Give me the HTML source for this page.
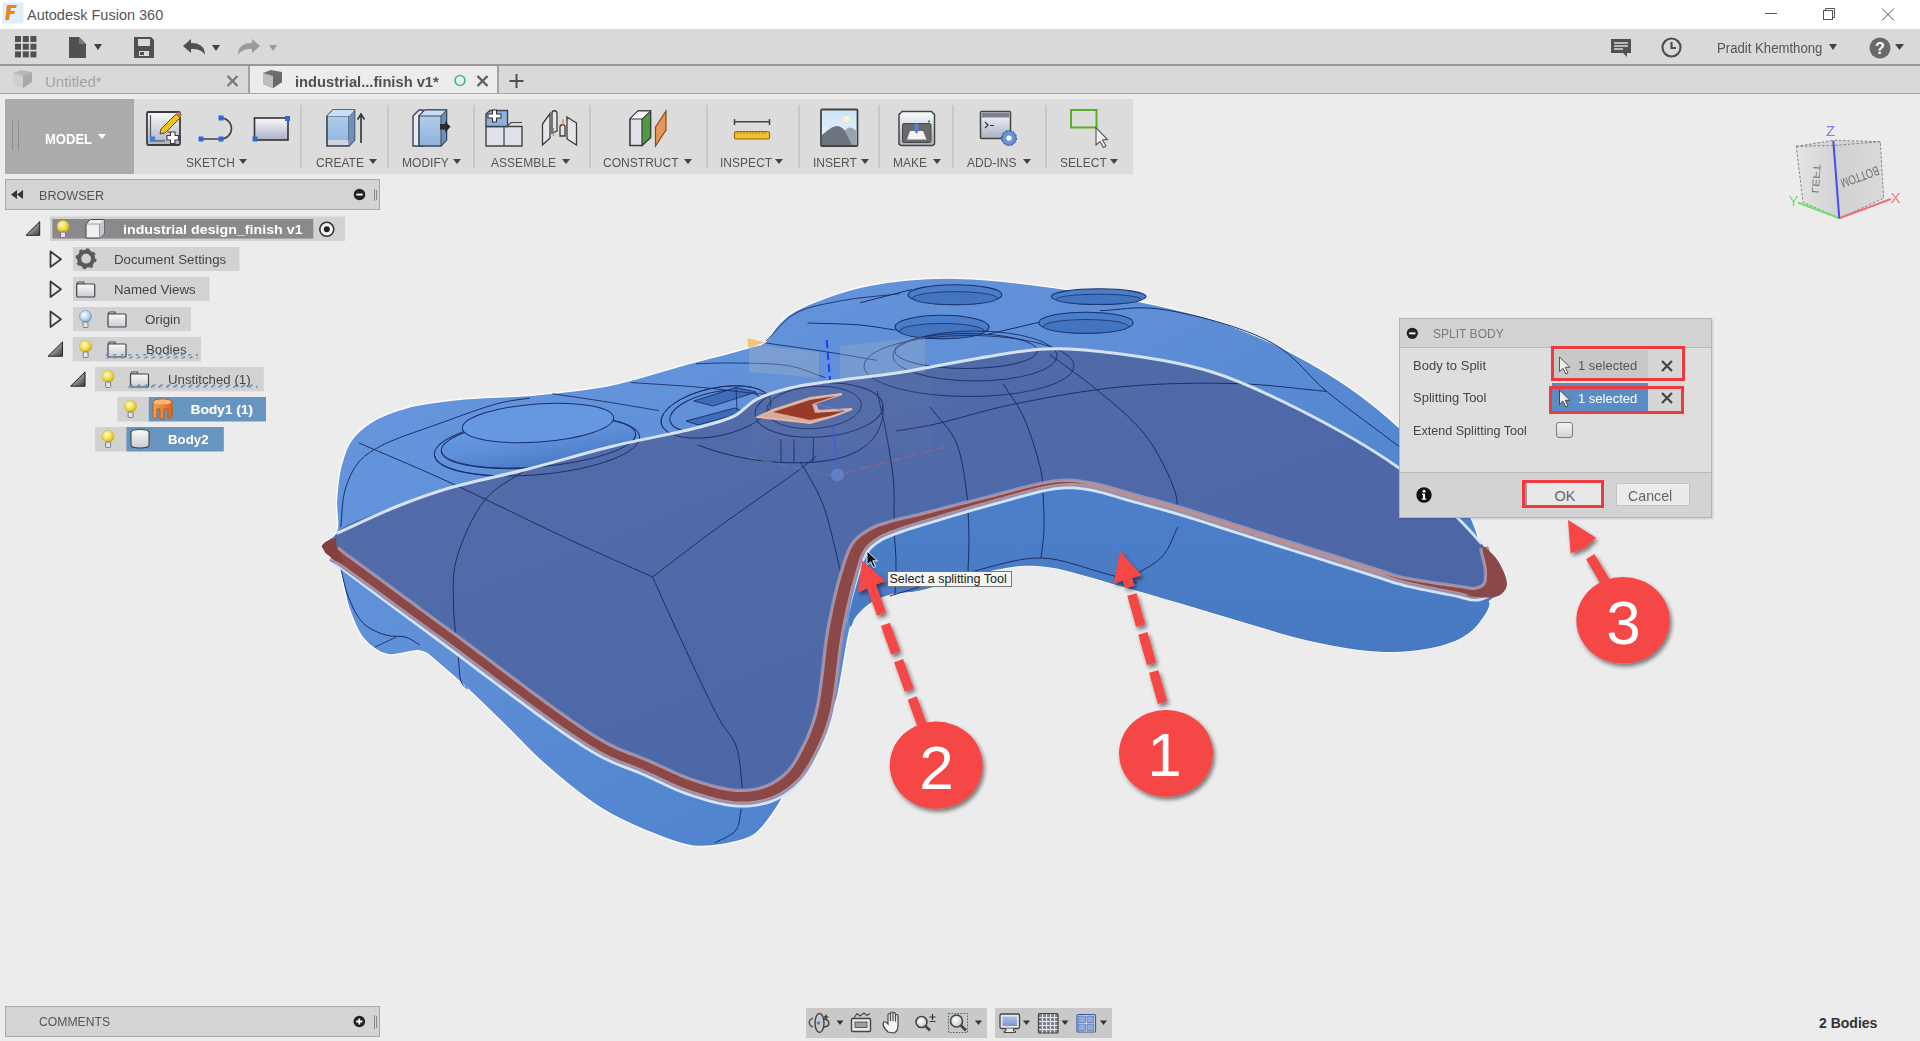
<!DOCTYPE html>
<html><head><meta charset="utf-8">
<style>
*{margin:0;padding:0;box-sizing:border-box}
html,body{width:1920px;height:1041px;overflow:hidden;background:#ececec;font-family:"Liberation Sans",sans-serif;color:#333}
.a{position:absolute}
.t{position:absolute;white-space:nowrap;transform-origin:0 0;line-height:1}
svg{position:absolute;overflow:visible}
.rl{position:absolute;top:156px;font-size:13.7px;color:#555;white-space:nowrap;transform:scaleX(.88);transform-origin:0 0;line-height:1}
.sep{position:absolute;top:105px;width:2px;height:63px;background:#c9c9c9}
.tri{position:absolute;width:0;height:0;border-left:4px solid transparent;border-right:4px solid transparent;border-top:5px solid #444}
.row{position:absolute;height:24px;background:#d2d2d2}
.tt{position:absolute;font-size:13.7px;color:#444;white-space:nowrap;transform:scaleX(.97);transform-origin:0 0;line-height:1}
</style></head><body>

<!-- title bar -->
<div class="a" style="left:0;top:0;width:1920px;height:29px;background:#fff"></div>
<svg style="left:2px;top:2px" width="22" height="22" viewBox="0 0 22 22"><rect x="0.5" y="0.5" width="21" height="21" fill="#dfeef8"/><path d="M5,3 L15,3 L14,6 L9,6 L8.6,9 L13,9 L12.3,12 L8,12 L6.8,18 L3.2,18 Z" fill="#e8861e"/></svg>
<div class="t" style="left:27px;top:8px;font-size:14.5px;color:#555">Autodesk Fusion 360</div>
<div class="a" style="left:1765px;top:13px;width:12px;height:1px;background:#555"></div>
<svg style="left:1822px;top:7px" width="14" height="14" viewBox="0 0 14 14"><rect x="1.5" y="3.5" width="9" height="9" fill="none" stroke="#555"/><path d="M3.5,3.5 V1.5 H12.5 V10.5 H10.5" fill="none" stroke="#555"/></svg>
<svg style="left:1881px;top:8px" width="14" height="13" viewBox="0 0 14 13"><path d="M1,0.5 L13,12.5 M13,0.5 L1,12.5" stroke="#555" stroke-width="1"/></svg>
<!-- toolbar -->
<div class="a" style="left:0;top:29px;width:1920px;height:35px;background:#d9d9d9"></div>
<div class="a" style="left:0;top:64px;width:1920px;height:2px;background:#989898"></div>
<svg style="left:15px;top:36px" width="23" height="23" viewBox="0 0 23 23" fill="#505050"><rect x="0" y="0" width="6" height="6"/><rect x="7.8" y="0" width="6" height="6"/><rect x="15.4" y="0" width="6" height="6"/><rect x="0" y="7.7" width="6" height="6"/><rect x="7.8" y="7.7" width="6" height="6"/><rect x="15.4" y="7.7" width="6" height="6"/><rect x="0" y="15.4" width="6" height="6"/><rect x="7.8" y="15.4" width="6" height="6"/><rect x="15.4" y="15.4" width="6" height="6"/></svg>
<svg style="left:69px;top:37px" width="36" height="22" viewBox="0 0 36 22"><path d="M0,0 H10 L17,7 V21 H0 Z" fill="#505050"/><path d="M10,0 V7 H17" fill="#7a7a7a"/><path d="M25,7 L33,7 L29,13 Z" fill="#404040"/></svg>
<svg style="left:133px;top:37px" width="22" height="22" viewBox="0 0 22 22"><path d="M1,0 H18 L21,3 V21 H1 Z" fill="#505050"/><rect x="5" y="2" width="12" height="7" fill="#d9d9d9"/><rect x="6" y="14" width="10" height="5" fill="#d9d9d9"/><rect x="7" y="15" width="4" height="3" fill="#505050"/></svg>
<svg style="left:183px;top:39px" width="40" height="18" viewBox="0 0 40 18"><path d="M0,7 L8,0 V4 C16,4 22,7 22,16 C19,11 15,10 8,10 V14 Z" fill="#505050"/><path d="M29,6 L37,6 L33,12 Z" fill="#404040"/></svg>
<svg style="left:238px;top:39px" width="40" height="18" viewBox="0 0 40 18"><path d="M22,7 L14,0 V4 C6,4 0,7 0,16 C3,11 7,10 14,10 V14 Z" fill="#9a9a9a"/><path d="M31,6 L39,6 L35,12 Z" fill="#9a9a9a"/></svg>
<svg style="left:1611px;top:38px" width="22" height="20" viewBox="0 0 22 20"><path d="M0,1 H20 V15 H16 L16,19 L12,15 H0 Z" fill="#505050"/><path d="M3,5 H17 M3,8 H17 M3,11 H12" stroke="#d9d9d9" stroke-width="1.3"/></svg>
<svg style="left:1661px;top:37px" width="21" height="21" viewBox="0 0 21 21"><circle cx="10.5" cy="10.5" r="9" fill="none" stroke="#505050" stroke-width="2.2"/><path d="M10.5,5 V11 H15" fill="none" stroke="#505050" stroke-width="2.2"/></svg>
<div class="t" style="left:1717px;top:41px;font-size:14px;color:#555;transform:scaleX(.94)">Pradit Khemthong</div>
<div class="tri" style="left:1829px;top:44px;border-left-width:4.5px;border-right-width:4.5px;border-top-width:6px;border-top-color:#444"></div>
<svg style="left:1869px;top:37px" width="36" height="22" viewBox="0 0 36 22"><circle cx="11" cy="11" r="10.5" fill="#6a6a6a"/><text x="11" y="17" font-family="Liberation Sans" font-weight="bold" font-size="16" fill="#fff" text-anchor="middle">?</text><path d="M26,7 L35,7 L30.5,13 Z" fill="#444"/></svg>
<!-- tabs -->
<div class="a" style="left:0;top:66px;width:1920px;height:27px;background:#d9d9d9"></div>
<div class="a" style="left:0;top:93px;width:1920px;height:1px;background:#a8a8a8"></div>
<div class="a" style="left:250px;top:66px;width:247px;height:27px;background:#ececec"></div>
<div class="a" style="left:248px;top:66px;width:2px;height:27px;background:#a2a2a2"></div>
<div class="a" style="left:497px;top:66px;width:2px;height:27px;background:#a2a2a2"></div>
<svg style="left:12px;top:69px" width="22" height="20" viewBox="0 0 22 20"><path d="M1,4 L9,1 L20,3 L20,13 L11,19 L1,15 Z" fill="#b9b9b9"/><path d="M1,4 L11,7 L11,19 L1,15 Z" fill="#cfcfcf"/><path d="M11,7 L20,3 L20,13 L11,19 Z" fill="#a9a9a9"/></svg>
<div class="t" style="left:45px;top:74px;font-size:15px;color:#a4a4a4">Untitled*</div>
<svg style="left:226px;top:75px" width="13" height="12" viewBox="0 0 13 12"><path d="M1.5,1 L11.5,11 M11.5,1 L1.5,11" stroke="#7a7a7a" stroke-width="2.4"/></svg>
<svg style="left:262px;top:69px" width="22" height="20" viewBox="0 0 22 20"><path d="M1,4 L9,1 L20,3 L20,13 L11,19 L1,15 Z" fill="#6f6f6f"/><path d="M1,4 L11,7 L11,19 L1,15 Z" fill="#bdbdbd"/><path d="M11,7 L20,3 L20,13 L11,19 Z" fill="#6a6a6a"/></svg>
<div class="t" style="left:295px;top:74px;font-size:15px;color:#505050;font-weight:bold;transform:scaleX(.98)">industrial...finish v1*</div>
<svg style="left:453px;top:74px" width="14" height="14" viewBox="0 0 14 14"><circle cx="7" cy="6.5" r="5" fill="none" stroke="#40b59a" stroke-width="1.6"/></svg>
<svg style="left:476px;top:75px" width="13" height="12" viewBox="0 0 13 12"><path d="M1.5,1 L11.5,11 M11.5,1 L1.5,11" stroke="#606060" stroke-width="2.4"/></svg>
<svg style="left:509px;top:74px" width="15" height="15" viewBox="0 0 15 15"><path d="M7.5,0 V14 M0.5,7 H14.5" stroke="#505050" stroke-width="2"/></svg>

<!-- ribbon -->
<div class="a" style="left:5px;top:99px;width:1128px;height:75px;background:#dcdcdc"></div>
<div class="a" style="left:5px;top:99px;width:129px;height:75px;background:#ababab"></div>
<div class="a" style="left:12px;top:121px;width:1px;height:29px;background:#8e8e8e"></div>
<div class="a" style="left:18px;top:121px;width:1px;height:29px;background:#8e8e8e"></div>
<div class="t" style="left:45px;top:132px;font-size:14px;color:#fff;font-weight:bold;transform:scaleX(.93)">MODEL</div>
<div class="tri" style="left:98px;top:134px;border-top-color:#fff;border-left-width:4px;border-right-width:4px;border-top-width:5px"></div>
<svg style="left:0;top:0" width="1140" height="180" viewBox="0 0 1140 180">
<defs>
<linearGradient id="rg1" x1="0" y1="0" x2="0" y2="1"><stop offset="0" stop-color="#fafbfd"/><stop offset="1" stop-color="#a9b1c4"/></linearGradient>
<linearGradient id="rgb" x1="0" y1="0" x2="0" y2="1"><stop offset="0" stop-color="#b8d2ee"/><stop offset="1" stop-color="#8fb2dc"/></linearGradient>
<linearGradient id="rgs" x1="0" y1="0" x2="0" y2="1"><stop offset="0" stop-color="#c9e3f7"/><stop offset="1" stop-color="#f2f8fc"/></linearGradient>
</defs>
<!-- sketch -->
<rect x="147" y="112" width="33" height="33" rx="1.5" fill="url(#rg1)" stroke="#3c3c3c" stroke-width="1.8"/>
<path d="M150.5,115 V140.8 H165" fill="none" stroke="#555" stroke-width="1.2"/>
<rect x="150" y="136.5" width="5" height="5" fill="#3b82e0"/>
<path d="M161,129 L176,114 L180,118 L165,133 L160,134 Z" fill="#f2c21b" stroke="#4a4a4a" stroke-width="1"/>
<path d="M176,114 L178.5,111.5 L182,115 L180,118 Z" fill="#c27a3a"/>
<path d="M169.5,133 h7.5 v3.5 h3.5 v4.5 h-3.5 v3.5 h-4.5 v-3.5 h-3.5 v-4.5 h3.5 v-3.5z" fill="#fff" stroke="#3c3c3c" stroke-width="1.1" transform="translate(-2,-1)"/>
<!-- spline -->
<path d="M201,139 H221 M221,118 A10.5,10.5 0 0 1 221,139" fill="none" stroke="#444" stroke-width="1.6"/>
<rect x="198.5" y="136.5" width="5" height="5" fill="#3268d4"/><rect x="218.5" y="136.5" width="5" height="5" fill="#3268d4"/><rect x="218.5" y="115.5" width="5" height="5" fill="#3268d4"/>
<!-- rect -->
<rect x="254.5" y="118" width="33.5" height="22" fill="url(#rg1)" stroke="#333" stroke-width="1.6"/>
<rect x="285" y="116" width="5" height="5" fill="#3268d4"/><rect x="252.5" y="136.5" width="5" height="5" fill="#3268d4"/>
<!-- create -->
<path d="M327,116 L333,110 H354.5 V140 L349,146 H327 Z" fill="url(#rgb)" stroke="#3a4456" stroke-width="1.6"/>
<path d="M327,116 H349 L354.5,110 M349,116 V146" fill="none" stroke="#3a4456" stroke-width="1.2"/>
<path d="M349,116 L354.5,110 V140 L349,146 Z" fill="#6f8fbf"/>
<path d="M333,110 H354.5 L349,116 H327 Z" fill="#c9def4"/>
<rect x="328" y="140" width="20.5" height="5" fill="#d0d4dc"/>
<path d="M361,143 V116 M357.5,119.5 L361,114 L364.5,119.5" fill="none" stroke="#333" stroke-width="1.6"/>
<!-- modify -->
<path d="M413,116 L419,110 H423 V146 H413 Z" fill="#e8eaee" stroke="#3a4456" stroke-width="1.4"/>
<path d="M419,116 L425,110 H446.5 V140 L441,146 H419 Z" fill="url(#rgb)" stroke="#3a4456" stroke-width="1.6"/>
<path d="M441,116 L446.5,110 V140 L441,146 Z" fill="#6f8fbf" stroke="#3a4456" stroke-width="1"/>
<path d="M425,110 H446.5 L441,116 H419 Z" fill="#c9def4" stroke="#3a4456" stroke-width="1"/>
<path d="M440,124 H445 V121 L450.5,126.8 L445,132.5 V129.5 H440 Z" fill="#2a2a2a"/>
<!-- assemble -->
<path d="M486,126.5 H522 V146 H486 Z" fill="#dfe2e8" stroke="#444" stroke-width="1.4"/>
<path d="M504,126.5 V146 M507,126.5 L511,122.5 H522" fill="none" stroke="#444" stroke-width="1.2"/>
<path d="M486,114 L490,110.5 H507.5 V126.5 H486 Z" fill="#8fb2dc" stroke="#3a4456" stroke-width="1.4"/>
<path d="M489.5,110.5 h4.5 v-4 h4 v4 h4.5 v4 h-4.5 v4 h-4 v-4 h-4.5 z" fill="#fff" stroke="#333" stroke-width="1.1" transform="translate(-1.5,3.5)"/>
<path d="M542.5,124 L550,113.5 V138 L542.5,145 Z M552,113 C552,110 557,110 557,113 V131 L552,133 Z M560,136 V127 C560,124 565,124 565,127 V136 Z M567,117 L576.5,123 V145 L567,139 Z" fill="#e4e6ea" stroke="#3c3c3c" stroke-width="1.3"/>
<path d="M553.5,128 V136 M563,119 V126" stroke="#f07a1a" stroke-width="1.3"/>
<!-- construct -->
<path d="M630,119 L638,111 H650.5 V137.5 L642,145.5 H630 Z" fill="#dfe2e8" stroke="#3c3c3c" stroke-width="1.6"/>
<path d="M642,119 L650.5,111 V137.5 L642,145.5 Z" fill="#4f9a45" stroke="#3c3c3c" stroke-width="1.2"/>
<path d="M638,111 H650.5 L642,119 H630 Z" fill="#f4f4f6" stroke="#3c3c3c" stroke-width="1"/>
<path d="M655.5,127 L666,111 V130 L655.5,146 Z" fill="#e8955a" stroke="#8a4a1a" stroke-width="1.2"/>
<!-- inspect -->
<path d="M734.5,121.7 H769.5 M734.5,119 V125 M769.5,119 V125" stroke="#444" stroke-width="1.5"/>
<rect x="734.5" y="131.5" width="35" height="7.5" rx="1.5" fill="#f0c030" stroke="#9a6a10" stroke-width="1.2"/>
<path d="M738,132 v2 M741,132 v2 M744,132 v2 M747,132 v2 M750,132 v2 M753,132 v2 M756,132 v2 M759,132 v2 M762,132 v2 M765,132 v2" stroke="#9a6a10" stroke-width="0.8"/>
<!-- insert -->
<rect x="821" y="109.5" width="36.5" height="36.5" rx="1" fill="url(#rgs)" stroke="#444" stroke-width="1.8"/>
<circle cx="846.5" cy="119" r="3" fill="#fff6c8"/>
<path d="M822,135 C828,130 832,126 838,126 C843,127 850,135 856.5,144 V145 H822 Z" fill="#6c7480"/>
<path d="M845,131 C848,126 852,127 856.5,131 V145 H852 Z" fill="#9aa4ae"/>
<!-- make -->
<path d="M899,114.5 L902,111.5 H931.5 L934.5,114.5 V144 L932.5,145.5 H901 L899,144 Z" fill="url(#rg1)" stroke="#444" stroke-width="1.5"/>
<rect x="902.5" y="123.5" width="28.5" height="19" rx="1.5" fill="#6a6a6a" stroke="#444" stroke-width="1"/>
<path d="M907,139.5 L910,131 H923 L926.5,139.5 Z" fill="#f4f4f4"/>
<path d="M914.5,123.5 H918.5 V131 L916.5,134 L914.5,131 Z" fill="#4a86d0"/>
<circle cx="929" cy="121.4" r="1.1" fill="#1aa020"/>
<!-- add-ins -->
<rect x="980.5" y="111.5" width="30" height="27" rx="1" fill="url(#rg1)" stroke="#444" stroke-width="1.5"/>
<rect x="981.5" y="112.5" width="28" height="5" fill="#7c8290"/>
<path d="M985,122 L988,125 L985,128 M990,125.5 H994" fill="none" stroke="#333" stroke-width="1.2"/>
<circle cx="1009" cy="138" r="7.5" fill="#5d86c4" stroke="#2f4a80" stroke-width="1" stroke-dasharray="2.4 1.5"/>
<circle cx="1009" cy="138" r="6" fill="#6d95d0"/>
<circle cx="1009" cy="138" r="2.6" fill="#fff"/>
<!-- select -->
<rect x="1071" y="110" width="25.5" height="17.5" fill="none" stroke="#58b028" stroke-width="2"/>
<path d="M1096,127.5 L1096,145 L1100,141.5 L1103.5,147.5 L1106,146 L1102.5,140 L1107.5,139.5 Z" fill="#f0f0f0" stroke="#555" stroke-width="1.1"/>
</svg>
<div class="sep" style="left:300px"></div>
<div class="sep" style="left:387px"></div>
<div class="sep" style="left:473px"></div>
<div class="sep" style="left:589px"></div>
<div class="sep" style="left:706px"></div>
<div class="sep" style="left:798px"></div>
<div class="sep" style="left:878px"></div>
<div class="sep" style="left:952px"></div>
<div class="sep" style="left:1045px"></div>
<div class="rl" style="left:185.5px">SKETCH</div><div class="tri" style="left:238.5px;top:159px"></div>
<div class="rl" style="left:315.5px">CREATE</div><div class="tri" style="left:368.5px;top:159px"></div>
<div class="rl" style="left:402px">MODIFY</div><div class="tri" style="left:453px;top:159px"></div>
<div class="rl" style="left:491px">ASSEMBLE</div><div class="tri" style="left:562px;top:159px"></div>
<div class="rl" style="left:603px">CONSTRUCT</div><div class="tri" style="left:683.5px;top:159px"></div>
<div class="rl" style="left:720px">INSPECT</div><div class="tri" style="left:775px;top:159px"></div>
<div class="rl" style="left:813px">INSERT</div><div class="tri" style="left:860.5px;top:159px"></div>
<div class="rl" style="left:893px">MAKE</div><div class="tri" style="left:932.5px;top:159px"></div>
<div class="rl" style="left:967px">ADD-INS</div><div class="tri" style="left:1022.5px;top:159px"></div>
<div class="rl" style="left:1059.5px">SELECT</div><div class="tri" style="left:1110px;top:159px"></div>

<svg class="a" style="left:0;top:0" width="1920" height="1041" viewBox="0 0 1920 1041">
<defs>
<linearGradient id="gb" x1="0" y1="0" x2="1" y2="1">
<stop offset="0" stop-color="#6899e0"/><stop offset="0.4" stop-color="#5d8ed6"/><stop offset="0.65" stop-color="#5185cf"/><stop offset="0.8" stop-color="#4a7cc4"/><stop offset="1" stop-color="#4678c0"/>
</linearGradient>
<linearGradient id="glow" x1="0" y1="0" x2="0" y2="1"><stop offset="0" stop-color="#4d80ca"/><stop offset="1" stop-color="#4779c2"/></linearGradient>
<linearGradient id="gd" x1="0" y1="0" x2="1" y2="1">
<stop offset="0" stop-color="#546daa"/><stop offset="1" stop-color="#4a63a4"/>
</linearGradient>
</defs>
<path fill="url(#gb)" stroke="#fafafa" stroke-width="1.5" d="M321.5,546.0 C321.4,541.8 333.7,538.3 336.4,532.0 C339.8,524.2 335.7,511.6 336.4,501.0 C337.1,489.8 338.1,477.0 340.8,466.5 C343.2,457.1 345.8,448.0 351.0,440.5 C356.2,433.0 363.6,426.8 372.0,421.5 C381.6,415.5 393.6,411.3 406.5,407.7 C421.7,403.5 439.1,401.6 458.0,399.5 C480.8,397.0 508.6,397.3 533.8,395.0 C558.9,392.7 583.9,390.5 608.8,385.6 C633.9,380.6 659.8,371.5 683.8,365.0 C705.9,359.0 733.1,352.3 747.5,348.0 C755.0,345.8 759.6,345.9 764.4,342.5 C769.7,338.8 773.0,330.5 777.5,325.6 C781.5,321.2 784.4,317.7 790.0,314.0 C798.4,308.4 812.3,302.6 825.0,298.0 C839.1,292.8 853.5,288.2 871.0,285.0 C893.4,280.9 919.1,277.8 949.0,278.0 C989.3,278.3 1047.4,286.2 1091.0,293.0 C1128.8,298.9 1168.3,307.1 1196.0,314.6 C1214.6,319.6 1226.5,323.9 1242.0,330.0 C1258.5,336.5 1275.0,344.0 1292.0,353.0 C1310.8,362.9 1331.6,374.9 1349.7,387.6 C1367.4,400.0 1384.4,413.6 1399.7,428.0 C1414.4,441.8 1427.9,456.7 1440.0,472.0 C1451.6,486.7 1463.6,504.3 1471.0,518.0 C1476.4,528.0 1477.7,538.5 1482.6,545.5 C1486.4,551.0 1492.2,553.0 1496.0,558.0 C1500.1,563.4 1504.1,571.6 1505.7,577.0 C1506.8,580.7 1507.4,583.9 1506.6,586.8 C1505.8,589.7 1503.4,592.2 1500.9,594.5 C1497.8,597.3 1492.3,598.3 1489.0,602.0 C1484.9,606.6 1484.2,616.0 1480.0,621.7 C1475.7,627.6 1470.3,632.5 1463.3,636.7 C1454.5,641.9 1442.4,645.8 1430.0,648.3 C1415.2,651.3 1397.8,652.4 1380.0,651.7 C1359.3,650.9 1335.4,646.4 1313.3,641.7 C1290.9,637.0 1268.9,629.7 1246.7,623.3 C1224.4,616.9 1201.7,609.7 1180.0,603.3 C1159.4,597.3 1140.6,591.8 1119.8,586.0 C1097.6,579.8 1069.1,570.5 1050.6,567.6 C1038.5,565.7 1031.6,565.2 1020.0,566.0 C1004.5,567.1 983.2,572.5 966.0,576.8 C950.0,580.8 934.0,587.5 920.0,590.6 C908.7,593.1 897.7,592.4 888.7,595.0 C881.4,597.1 875.3,599.7 869.7,603.5 C864.1,607.3 858.2,613.5 855.0,618.0 C852.8,621.1 852.2,622.3 850.7,626.8 C846.5,639.2 841.1,684.9 836.6,700.0 C834.5,707.0 833.1,709.2 830.5,715.0 C826.6,723.5 821.0,735.9 815.0,746.0 C808.8,756.5 800.1,766.4 793.6,776.8 C787.3,786.9 783.3,797.9 776.7,807.6 C770.0,817.4 763.0,829.1 753.7,835.2 C744.9,841.0 733.4,842.6 723.0,844.4 C712.8,846.2 703.2,847.5 692.0,846.0 C678.0,844.1 661.1,836.9 646.0,830.6 C630.4,824.1 615.8,817.7 600.0,807.6 C580.7,795.3 556.4,774.6 540.0,760.0 C527.6,748.9 520.1,739.9 509.0,729.0 C496.3,716.5 480.2,700.6 467.7,689.0 C457.7,679.7 447.8,671.2 440.0,664.6 C434.4,659.8 429.6,654.8 425.3,652.6 C422.5,651.2 421.0,650.9 417.6,650.7 C410.8,650.3 396.0,656.7 386.9,654.5 C378.2,652.4 370.0,646.2 363.8,639.0 C356.7,630.8 352.4,618.0 348.4,606.5 C344.2,594.4 343.3,577.0 339.8,568.0 C337.7,562.7 335.9,559.6 333.0,556.0 C329.9,552.2 321.6,549.7 321.5,546.0Z"/>
<path fill="url(#glow)" d="M850.7,626.8 C851.8,627.0 852.8,621.1 855.0,618.0 C858.2,613.5 864.1,607.3 869.7,603.5 C875.3,599.7 881.4,597.1 888.7,595.0 C897.7,592.4 908.7,593.1 920.0,590.6 C934.0,587.5 950.0,580.8 966.0,576.8 C983.2,572.5 1004.5,567.1 1020.0,566.0 C1031.6,565.2 1038.5,565.7 1050.6,567.6 C1069.1,570.5 1097.6,579.8 1119.8,586.0 C1140.6,591.8 1159.4,597.3 1180.0,603.3 C1201.7,609.7 1224.4,616.9 1246.7,623.3 C1268.9,629.7 1290.9,637.0 1313.3,641.7 C1335.4,646.4 1359.3,650.9 1380.0,651.7 C1397.8,652.4 1415.2,651.3 1430.0,648.3 C1442.4,645.8 1454.5,641.9 1463.3,636.7 C1470.3,632.5 1475.7,627.6 1480.0,621.7 C1484.2,616.0 1491.0,606.4 1489.0,602.0 C1487.0,597.5 1476.4,597.6 1467.0,595.5 C1450.8,591.9 1426.5,591.3 1400.0,585.0 C1359.3,575.3 1288.6,548.8 1248.0,536.0 C1220.9,527.4 1200.4,521.1 1180.0,515.0 C1163.5,510.1 1150.1,506.2 1135.0,502.0 C1119.8,497.8 1102.9,492.0 1089.0,490.0 C1077.7,488.4 1070.5,487.8 1058.0,489.0 C1038.1,491.0 1005.6,500.8 981.5,507.0 C959.8,512.5 936.0,519.6 920.0,524.0 C909.8,526.8 902.9,528.2 895.0,531.0 C887.6,533.6 879.7,536.1 874.0,540.0 C869.1,543.3 865.1,546.6 862.0,552.0 C857.9,559.0 856.3,570.5 854.0,580.0 C851.6,589.8 848.2,601.4 848.0,610.0 C847.9,616.4 849.2,626.6 850.7,626.8Z"/>
<ellipse cx="955" cy="294.7" rx="47" ry="10" fill="#4a7dc8" stroke="#1c2f66" stroke-width="1.1" opacity="1" transform="rotate(0 955 294.7)"/>
<ellipse cx="955" cy="298.2" rx="42.300000000000004" ry="6.5" fill="#4374c0" stroke="#1c2f66" stroke-width="0.8"/>
<ellipse cx="1098.7" cy="296.6" rx="47.3" ry="7.8" fill="#4a7dc8" stroke="#1c2f66" stroke-width="1.1" opacity="1" transform="rotate(0 1098.7 296.6)"/>
<ellipse cx="1098.7" cy="299.33000000000004" rx="42.57" ry="5.07" fill="#4374c0" stroke="#1c2f66" stroke-width="0.8"/>
<ellipse cx="942" cy="327" rx="47" ry="11.7" fill="#4a7dc8" stroke="#1c2f66" stroke-width="1.1" opacity="1" transform="rotate(0 942 327)"/>
<ellipse cx="942" cy="331.095" rx="42.300000000000004" ry="7.6049999999999995" fill="#4374c0" stroke="#1c2f66" stroke-width="0.8"/>
<ellipse cx="1086" cy="322.7" rx="47.2" ry="10.5" fill="#4a7dc8" stroke="#1c2f66" stroke-width="1.1" opacity="1" transform="rotate(0 1086 322.7)"/>
<ellipse cx="1086" cy="326.375" rx="42.480000000000004" ry="6.825" fill="#4374c0" stroke="#1c2f66" stroke-width="0.8"/>
<defs><linearGradient id="donut" x1="0" y1="0" x2="0.3" y2="1"><stop offset="0" stop-color="#6b9ce3"/><stop offset="0.6" stop-color="#5d8fd9"/><stop offset="1" stop-color="#4a7cc8"/></linearGradient></defs>
<ellipse cx="537" cy="446" rx="103" ry="29" fill="none" stroke="#1c2f66" stroke-width="1.0" opacity="1" transform="rotate(-5 537 446)"/>
<ellipse cx="538.5" cy="442.7" rx="97.5" ry="24.7" fill="url(#donut)" stroke="#1c2f66" stroke-width="1" transform="rotate(-5 538.5 442.7)"/>
<ellipse cx="538" cy="423" rx="75.8" ry="19" fill="#6598e0" stroke="#1c2f66" stroke-width="1.0" opacity="1" transform="rotate(-4 538 423)"/>
<ellipse cx="716" cy="411" rx="47" ry="19" fill="none" stroke="#1c2f66" stroke-width="1.0" opacity="1" transform="rotate(-12 716 411)"/>
<ellipse cx="716" cy="412" rx="56" ry="24" fill="none" stroke="#1c2f66" stroke-width="0.9" opacity="1" transform="rotate(-12 716 412)"/>
<path d="M693.75,401 L736,387.5 L756,392 L713,406 Z" fill="#3f6cb8" stroke="#1c2f66" stroke-width="0.9"/>
<path d="M686,421 L735,408 L745,412 L698,425 Z" fill="#3f6cb8" stroke="#1c2f66" stroke-width="0.9"/>
<path d="M736,387.5 L737,410" stroke="#1c2f66" stroke-width="0.9"/>
<path d="M860.0,302.8 C877.2,298.4 894.4,293.9 911.6,289.5" fill="none" stroke="#1c2f66" stroke-width="1.0" opacity="1"/>
<path d="M807.5,323.0 C825.0,323.7 844.3,323.6 860.0,325.0 C872.9,326.2 883.3,328.3 895.0,330.0" fill="none" stroke="#1c2f66" stroke-width="1.0" opacity="1"/>
<path d="M989.0,334.0 C1005.7,330.1 1022.3,326.2 1039.0,322.3" fill="none" stroke="#1c2f66" stroke-width="1.0" opacity="1"/>
<path d="M1100.0,310.7 C1119.2,310.1 1135.4,305.9 1157.6,308.8 C1189.7,313.0 1243.2,326.7 1273.0,343.4 C1296.1,356.3 1307.1,375.2 1326.7,391.4 C1348.8,409.7 1375.4,428.5 1399.7,447.0" fill="none" stroke="#1c2f66" stroke-width="1.0" opacity="1"/>
<path d="M340.8,527.0 C342.2,514.7 341.8,501.1 345.0,490.0 C347.9,480.0 352.1,470.3 358.0,463.0 C363.5,456.2 369.5,452.2 378.8,447.0 C393.6,438.7 420.5,430.4 441.0,423.0 C460.9,415.8 483.5,407.1 500.0,403.0 C511.5,400.1 520.0,399.7 530.0,398.0" fill="none" stroke="#1c2f66" stroke-width="1.0" opacity="1"/>
<path d="M552.5,393.8 C569.2,396.2 585.4,398.5 602.5,401.2 C620.7,404.1 640.0,407.5 658.8,410.6" fill="none" stroke="#1c2f66" stroke-width="0.9" opacity="1"/>
<path d="M631.0,382.5 C654.8,384.2 681.6,385.6 702.5,387.5 C718.8,389.0 732.4,391.2 746.0,392.5 C758.0,393.6 768.7,394.2 780.0,395.0" fill="none" stroke="#1c2f66" stroke-width="0.9" opacity="1"/>
<path d="M696.0,363.8 C706.5,363.5 715.2,362.9 727.5,363.0 C744.8,363.2 772.4,362.7 790.0,366.0 C803.5,368.5 813.3,373.7 825.0,377.6" fill="none" stroke="#1c2f66" stroke-width="0.9" opacity="1"/>
<path d="M766.0,343.0 C785.7,345.9 806.0,348.6 825.0,351.6 C842.8,354.4 859.5,357.4 876.7,360.3" fill="none" stroke="#1c2f66" stroke-width="0.9" opacity="1"/>
<path d="M766.0,341.0 C775.7,331.9 783.3,320.2 795.0,313.6 C807.6,306.4 823.8,304.2 840.0,301.0 C858.4,297.3 880.0,296.1 900.0,293.7" fill="none" stroke="#1c2f66" stroke-width="0.9" opacity="1"/>
<path d="M340.7,568.0 C343.3,577.7 344.6,587.8 348.4,597.0 C352.3,606.4 356.9,617.3 363.8,623.8 C370.1,629.7 379.4,633.1 386.9,635.3 C393.4,637.2 400.3,635.4 406.0,637.2 C411.2,638.8 415.3,642.4 420.0,645.0" fill="none" stroke="#1c2f66" stroke-width="1.0" opacity="1"/>
<path d="M375.0,647.0 C382.2,643.7 389.3,640.3 396.5,637.0" fill="none" stroke="#1c2f66" stroke-width="0.9" opacity="1"/>
<path d="M458.0,654.5 C459.3,664.1 459.0,677.6 461.8,683.3 C463.3,686.3 465.7,687.1 467.6,689.0" fill="none" stroke="#1c2f66" stroke-width="1.0" opacity="1"/>
<path d="M890.0,596.0 C916.9,588.0 944.5,578.5 970.6,572.0 C994.7,566.0 1018.6,557.6 1041.0,558.0 C1061.6,558.4 1082.7,567.4 1100.0,572.0 C1113.8,575.7 1124.7,579.3 1137.0,583.0" fill="none" stroke="#1c2f66" stroke-width="1.0" opacity="1"/>
<path d="M894.0,531.0 C894.7,540.7 895.8,549.9 896.0,560.0 C896.2,571.1 895.3,583.3 895.0,595.0" fill="none" stroke="#1c2f66" stroke-width="1.0" opacity="1"/>
<path d="M968.0,509.0 C968.3,519.3 969.0,529.6 969.0,540.0 C969.0,550.6 968.3,561.3 968.0,572.0" fill="none" stroke="#1c2f66" stroke-width="1.0" opacity="1"/>
<path d="M1043.0,490.0 C1043.3,503.3 1044.5,517.9 1044.0,530.0 C1043.6,540.2 1042.0,548.7 1041.0,558.0" fill="none" stroke="#1c2f66" stroke-width="1.0" opacity="1"/>
<path d="M1178.0,526.7 C1173.0,536.4 1169.9,548.0 1163.0,555.8 C1156.2,563.4 1145.0,569.1 1137.0,573.3 C1130.9,576.5 1125.7,577.8 1120.0,580.0" fill="none" stroke="#1c2f66" stroke-width="1.0" opacity="1"/>
<path d="M741.3,809.0 C739.5,816.0 740.1,824.4 736.0,830.0 C731.6,836.0 722.0,838.7 715.0,843.0" fill="none" stroke="#1c2f66" stroke-width="1.0" opacity="1"/>
<path fill="url(#gd)" d="M336.4,533.5 C344.6,522.4 378.2,513.9 398.0,506.0 C416.0,498.9 430.9,493.5 450.2,487.8 C473.4,481.0 501.5,475.8 528.0,469.0 C555.9,461.9 584.8,453.0 613.5,446.0 C642.2,439.0 677.7,433.1 700.0,427.0 C714.4,423.1 725.2,420.7 735.0,415.6 C743.2,411.3 747.5,404.4 755.6,400.0 C765.3,394.8 777.7,391.1 790.0,388.0 C803.5,384.6 817.4,383.3 833.4,381.0 C853.2,378.1 876.8,376.0 900.0,372.4 C925.5,368.5 954.6,362.0 980.0,358.0 C1003.0,354.4 1023.3,349.8 1046.0,349.0 C1070.2,348.2 1094.9,350.6 1121.0,354.0 C1150.0,357.8 1182.2,362.7 1212.0,372.0 C1242.6,381.5 1271.9,395.7 1302.0,411.0 C1334.2,427.4 1371.4,448.4 1399.0,468.0 C1421.8,484.2 1442.7,503.7 1457.6,518.0 C1467.7,527.6 1478.1,538.7 1481.6,543.6 C1482.8,545.3 1482.9,545.6 1483.6,547.5 C1485.4,552.2 1489.6,565.2 1490.0,572.4 C1490.3,577.8 1490.4,583.4 1488.0,586.8 C1485.8,589.9 1481.3,591.9 1477.0,592.6 C1471.6,593.5 1465.8,591.1 1457.6,589.7 C1443.5,587.3 1414.4,582.6 1400.0,579.0 C1391.2,576.8 1389.0,575.5 1379.0,572.3 C1354.0,564.4 1284.6,542.6 1248.0,531.0 C1221.6,522.7 1200.4,515.5 1180.0,509.4 C1163.5,504.5 1150.1,501.0 1135.0,496.9 C1119.8,492.7 1102.9,486.8 1089.0,484.6 C1077.8,482.8 1070.7,481.9 1058.3,483.0 C1038.4,484.8 1005.6,495.3 981.5,501.5 C959.8,507.1 936.0,514.0 920.0,518.4 C909.8,521.2 902.9,522.7 895.0,525.4 C887.6,527.9 880.2,530.1 874.0,533.8 C868.3,537.3 863.0,540.8 859.0,546.5 C854.1,553.5 851.9,563.2 848.6,574.0 C844.1,588.6 839.9,606.8 836.0,626.8 C831.0,652.4 829.1,692.2 822.8,715.4 C818.5,731.1 813.2,742.9 807.4,753.8 C802.7,762.7 798.4,770.4 792.0,776.8 C785.6,783.2 777.6,788.7 769.0,792.0 C759.8,795.5 749.5,797.2 738.3,796.8 C724.4,796.3 707.2,791.0 692.0,786.0 C676.4,780.8 661.3,772.7 646.0,766.0 C630.7,759.3 619.2,756.9 600.0,746.0 C561.9,724.3 486.4,664.2 440.0,630.5 C404.2,604.5 361.1,572.4 345.0,561.0 C339.6,557.2 335.7,557.3 334.0,553.5 C331.9,548.8 331.9,539.6 336.4,533.5Z"/>
<ellipse cx="966" cy="351" rx="71.5" ry="17.5" fill="none" stroke="#1c2f66" stroke-width="1.0" opacity="1" transform="rotate(0 966 351)"/>
<ellipse cx="975" cy="356" rx="82" ry="25" fill="none" stroke="#1c2f66" stroke-width="0.9" opacity="1" transform="rotate(0 975 356)"/>
<ellipse cx="969" cy="366" rx="105" ry="30.5" fill="none" stroke="#1c2f66" stroke-width="0.9" opacity="1" transform="rotate(0 969 366)"/>
<path d="M434.4,455 A103,29 -5 0 0 639.6,437" fill="none" stroke="#1c2f66" stroke-width="1"/>
<path d="M441.4,451.2 A97.5,24.7 -5 0 0 635.6,434.2" fill="none" stroke="#1c2f66" stroke-width="1"/>
<ellipse cx="716" cy="412" rx="56" ry="24" fill="none" stroke="#1c2f66" stroke-width="0.9" opacity="1" transform="rotate(-12 716 412)"/>
<path d="M359.0,443.0 C386.0,454.7 409.7,464.3 440.0,478.0 C479.3,495.8 535.6,524.0 574.5,542.0 C603.9,555.6 626.5,565.3 652.5,577.0" fill="none" stroke="#1c2f66" stroke-width="1.0" opacity="1"/>
<path d="M652.5,577.0 C671.3,562.7 687.6,549.7 709.0,534.0 C736.2,513.9 785.9,480.0 803.0,467.0 C809.6,461.9 812.0,459.7 816.5,456.0" fill="none" stroke="#1c2f66" stroke-width="1.0" opacity="1"/>
<path d="M652.5,577.0 C662.3,598.6 671.4,619.2 682.0,641.7 C693.7,666.6 709.3,701.2 719.7,720.0 C725.9,731.1 732.2,735.6 736.0,745.7 C740.5,757.7 740.3,773.9 742.4,788.0" fill="none" stroke="#1c2f66" stroke-width="1.0" opacity="1"/>
<path d="M526.0,469.6 C512.6,479.4 496.8,485.6 485.7,499.0 C472.6,514.7 460.9,542.1 456.0,561.0 C452.2,575.5 453.4,588.1 453.4,601.4 C453.4,614.4 455.1,627.1 456.0,640.0" fill="none" stroke="#1c2f66" stroke-width="1.0" opacity="1"/>
<path d="M800.4,461.5 C807.6,475.0 816.0,486.8 822.0,501.9 C828.9,519.4 834.2,545.6 838.0,561.0 C840.4,570.7 841.6,577.0 843.4,585.0" fill="none" stroke="#1c2f66" stroke-width="1.0" opacity="1"/>
<path d="M930.0,407.0 C938.7,418.7 949.8,427.9 956.0,442.0 C963.5,458.8 966.3,492.7 968.0,503.0 C968.6,506.5 968.7,507.7 969.0,510.0" fill="none" stroke="#1c2f66" stroke-width="1.0" opacity="1"/>
<path d="M1003.0,383.7 C1009.7,394.4 1017.1,403.2 1023.0,415.8 C1030.3,431.4 1038.1,457.8 1041.0,471.0 C1042.6,478.2 1042.3,482.3 1043.0,488.0" fill="none" stroke="#1c2f66" stroke-width="1.0" opacity="1"/>
<path d="M1049.6,354.6 C1064.1,365.3 1078.2,374.4 1093.0,386.7 C1110.2,401.0 1132.1,417.8 1146.0,436.0 C1158.9,453.0 1170.4,477.4 1175.0,491.7 C1177.6,499.9 1177.0,505.2 1178.0,512.0" fill="none" stroke="#1c2f66" stroke-width="1.0" opacity="1"/>
<path d="M896.0,431.0 C908.3,428.9 918.5,427.7 933.0,424.6 C954.1,420.1 981.8,410.9 1010.0,405.0 C1043.8,398.0 1084.6,390.3 1122.5,386.7 C1160.9,383.1 1202.9,382.6 1239.0,383.7 C1270.3,384.7 1297.5,388.8 1326.7,391.4" fill="none" stroke="#1c2f66" stroke-width="1.0" opacity="1"/>
<ellipse cx="819" cy="410" rx="64" ry="27" fill="none" stroke="#1c2f66" stroke-width="1.0" opacity="1" transform="rotate(-4 819 410)"/>
<ellipse cx="814" cy="407.5" rx="47.5" ry="21" fill="none" stroke="#1c2f66" stroke-width="0.9" opacity="1" transform="rotate(-4 814 407.5)"/>
<path d="M698,445 C740,462 800,468 840,458 C870,450 885,430 883,405" fill="none" stroke="#1c2f66" stroke-width="1"/>
<path d="M781.0,439.0 C781.0,446.7 781.0,454.3 781.0,462.0" fill="none" stroke="#1c2f66" stroke-width="0.9" opacity="1"/>
<path d="M794.0,439.0 C794.0,447.0 794.0,455.0 794.0,463.0" fill="none" stroke="#1c2f66" stroke-width="0.9" opacity="1"/>
<path d="M813.5,438.0 C813.3,446.0 813.2,454.0 813.0,462.0" fill="none" stroke="#1c2f66" stroke-width="0.9" opacity="1"/>
<path d="M877.0,391.0 C880.5,407.3 884.7,424.0 887.5,440.0 C890.2,455.3 892.7,470.9 893.8,485.0 C894.6,497.4 893.9,508.3 894.0,520.0" fill="none" stroke="#1c2f66" stroke-width="1.0" opacity="1"/>
<path d="M749,344 L819,352 L819,378 L749,372 Z" fill="#a8b4c0" opacity="0.35"/>
<path d="M840,346 L925,337 L925,372 L840,378 Z" fill="#a8b4c0" opacity="0.3"/>
<path d="M752,378 L932,378 L932,447 L752,447 Z" fill="#a0a8b8" opacity="0.05"/>
<path d="M747.5,338.3 L765,342.5 L748.3,347.5 Z" fill="#f4c47a"/>
<path d="M826.7,340 L830,380" stroke="#1a3cff" stroke-width="2" stroke-dasharray="8 4"/>
<path d="M833,427 L836.7,465" stroke="#3a5aee" stroke-width="1.4" opacity="0.8"/>
<circle cx="837.5" cy="475" r="6.5" fill="#6a8ad0" opacity="0.7"/>
<path d="M845,473 L945,447" stroke="#b06080" stroke-width="1.3" stroke-dasharray="10 6" opacity="0.7"/>
<path d="M747,457 L830,475" stroke="#40a080" stroke-width="1.1" stroke-dasharray="10 6" opacity="0.6"/>
<path d="M758,417 L773,410 L810,398 L842,394 L815,403 L818,411 L852,409 L834,416 L810,423 Z" fill="#d8a898" stroke="#e0b8a8" stroke-width="2"/>
<path d="M773,412 L810,400 L836,396 L812,404 L815,413 L845,411 L830,416 L810,420 Z" fill="#983a28"/>
<path d="M814,404 L845,411" fill="none" stroke="#6a88c8" stroke-width="0.8"/>
<path fill="#d6e4f6" d="M328.7,561.4 L331.2,563.1 L333.5,564.6 L336.1,566.4 L339.5,568.8 L340.8,569.7 L342.1,570.7 L343.6,571.7 L345.2,572.9 L346.8,574.1 L348.6,575.4 L350.4,576.8 L352.3,578.2 L354.3,579.7 L356.4,581.2 L358.6,582.8 L360.8,584.5 L363.1,586.2 L365.4,587.9 L367.8,589.7 L370.3,591.5 L372.8,593.4 L375.3,595.3 L377.9,597.2 L380.6,599.2 L383.3,601.2 L386.0,603.2 L388.7,605.3 L391.5,607.3 L394.3,609.4 L397.1,611.5 L399.9,613.6 L402.8,615.7 L405.6,617.8 L408.5,620.0 L411.4,622.1 L414.2,624.2 L417.1,626.3 L419.9,628.4 L422.8,630.5 L425.6,632.6 L428.4,634.7 L431.2,636.8 L434.0,638.8 L436.1,640.4 L438.3,642.0 L440.5,643.6 L442.8,645.3 L445.1,647.0 L447.4,648.7 L449.8,650.4 L452.2,652.2 L454.6,654.1 L457.1,655.9 L459.6,657.8 L462.1,659.7 L464.6,661.6 L467.2,663.5 L469.8,665.4 L472.4,667.4 L475.0,669.4 L477.6,671.4 L480.3,673.4 L483.0,675.4 L485.7,677.4 L488.4,679.5 L491.1,681.5 L493.8,683.6 L496.5,685.6 L499.2,687.7 L501.9,689.7 L504.7,691.8 L507.4,693.8 L510.2,695.9 L512.9,697.9 L515.6,700.0 L518.3,702.0 L521.1,704.0 L523.8,706.0 L526.5,708.0 L529.2,710.0 L531.9,712.0 L534.5,713.9 L537.2,715.9 L539.8,717.8 L542.4,719.7 L545.0,721.6 L547.6,723.5 L550.2,725.3 L552.7,727.1 L555.2,728.9 L557.7,730.6 L560.2,732.4 L562.6,734.1 L565.0,735.7 L567.4,737.4 L569.7,738.9 L572.0,740.5 L574.3,742.0 L576.6,743.5 L578.8,745.0 L580.9,746.4 L583.0,747.7 L585.1,749.0 L587.2,750.3 L589.2,751.5 L591.1,752.7 L593.1,753.8 L595.0,754.9 L598.6,757.0 L602.2,758.8 L605.6,760.5 L608.8,762.1 L611.9,763.5 L615.0,764.8 L617.9,766.0 L620.7,767.1 L623.5,768.2 L626.2,769.2 L628.8,770.2 L631.4,771.2 L634.0,772.2 L636.6,773.2 L639.2,774.3 L641.9,775.4 L644.7,776.6 L647.5,777.9 L650.3,779.2 L653.1,780.6 L655.9,781.9 L658.8,783.3 L661.7,784.6 L664.6,786.0 L667.5,787.3 L670.4,788.7 L673.4,790.0 L676.4,791.3 L679.4,792.5 L682.5,793.7 L685.6,794.9 L688.7,796.0 L691.8,797.0 L695.0,798.0 L698.2,799.1 L701.4,800.1 L704.7,801.1 L708.0,802.0 L711.4,803.0 L714.7,803.8 L718.0,804.6 L721.4,805.3 L724.7,806.0 L728.0,806.5 L731.4,807.0 L734.6,807.3 L737.9,807.5 L741.6,807.6 L745.3,807.6 L749.0,807.4 L752.6,807.1 L756.1,806.6 L759.6,806.0 L763.0,805.3 L766.4,804.4 L769.7,803.4 L773.0,802.2 L776.3,800.8 L779.6,799.2 L782.8,797.4 L785.8,795.5 L788.8,793.4 L791.6,791.3 L794.3,789.0 L796.9,786.7 L799.4,784.2 L801.8,781.6 L804.0,778.8 L806.0,776.0 L807.9,773.1 L809.6,770.2 L811.2,767.3 L812.8,764.3 L814.3,761.3 L815.8,758.2 L817.2,755.6 L818.6,753.0 L819.9,750.2 L821.3,747.4 L822.6,744.6 L823.9,741.6 L825.2,738.6 L826.4,735.4 L827.7,732.2 L828.9,728.8 L830.0,725.3 L831.1,721.7 L832.2,718.0 L832.9,715.3 L833.6,712.5 L834.2,709.7 L834.8,706.8 L835.3,703.8 L835.9,700.8 L836.4,697.7 L836.9,694.5 L837.3,691.3 L837.8,688.1 L838.2,684.8 L838.7,681.5 L839.1,678.2 L839.5,674.9 L839.9,671.5 L840.3,668.2 L840.7,664.9 L841.1,661.6 L841.5,658.3 L841.9,655.0 L842.3,651.8 L842.7,648.7 L843.1,645.6 L843.5,642.5 L844.0,639.6 L844.4,636.7 L844.9,633.9 L845.3,631.3 L845.8,628.7 L846.5,625.4 L847.2,622.2 L847.9,619.0 L848.6,615.9 L849.3,612.8 L850.0,609.7 L850.7,606.7 L851.4,603.7 L852.2,600.8 L852.9,597.9 L853.6,595.1 L854.4,592.4 L855.1,589.7 L855.9,587.0 L856.6,584.5 L857.4,582.0 L858.1,579.5 L858.9,577.1 L860.1,573.5 L861.2,570.1 L862.2,566.8 L863.2,563.8 L864.2,561.1 L865.3,558.6 L866.3,556.5 L867.3,554.6 L868.4,553.2 L869.7,551.3 L871.1,549.5 L872.8,547.9 L874.7,546.2 L876.9,544.5 L879.3,542.9 L881.4,541.5 L883.7,540.3 L886.2,539.1 L888.9,537.9 L891.8,536.8 L894.9,535.6 L898.0,534.4 L900.7,533.4 L903.4,532.4 L906.1,531.5 L909.0,530.6 L912.0,529.7 L915.1,528.8 L918.6,527.7 L922.3,526.6 L924.6,525.9 L927.0,525.1 L929.5,524.4 L932.1,523.6 L934.8,522.8 L937.6,521.9 L940.4,521.1 L943.3,520.2 L946.2,519.3 L949.2,518.4 L952.2,517.5 L955.3,516.6 L958.4,515.7 L961.5,514.8 L964.6,513.9 L967.7,512.9 L970.9,512.0 L974.0,511.1 L977.1,510.3 L980.2,509.4 L983.3,508.5 L986.2,507.8 L989.1,507.0 L992.1,506.1 L995.1,505.3 L998.1,504.4 L1001.2,503.6 L1004.3,502.7 L1007.5,501.8 L1010.6,500.9 L1013.8,500.0 L1017.0,499.1 L1020.1,498.2 L1023.3,497.4 L1026.4,496.5 L1029.5,495.7 L1032.5,495.0 L1035.5,494.2 L1038.4,493.5 L1041.3,492.8 L1044.1,492.2 L1046.8,491.6 L1049.5,491.1 L1052.0,490.7 L1054.4,490.3 L1056.7,490.0 L1058.9,489.7 L1062.3,489.4 L1065.4,489.3 L1068.3,489.2 L1071.0,489.2 L1073.7,489.3 L1076.3,489.5 L1079.0,489.8 L1081.8,490.1 L1084.8,490.5 L1087.9,491.0 L1090.6,491.5 L1093.4,492.0 L1096.2,492.7 L1099.1,493.4 L1102.0,494.1 L1105.1,494.9 L1108.1,495.8 L1111.2,496.7 L1114.4,497.6 L1117.5,498.6 L1120.7,499.5 L1123.9,500.5 L1127.0,501.4 L1130.2,502.3 L1133.3,503.2 L1136.3,504.0 L1139.3,504.8 L1142.2,505.6 L1145.1,506.4 L1148.0,507.2 L1150.9,507.9 L1153.8,508.7 L1156.7,509.5 L1159.6,510.3 L1162.6,511.2 L1165.6,512.0 L1168.6,512.9 L1171.7,513.8 L1174.9,514.7 L1178.1,515.6 L1180.8,516.4 L1183.4,517.2 L1186.1,518.0 L1188.8,518.9 L1191.5,519.7 L1194.3,520.6 L1197.0,521.4 L1199.8,522.3 L1202.6,523.2 L1205.4,524.1 L1208.3,525.1 L1211.2,526.0 L1214.2,527.0 L1217.1,527.9 L1220.2,528.9 L1223.2,529.9 L1226.3,530.9 L1229.5,531.9 L1232.7,532.9 L1236.0,534.0 L1239.3,535.0 L1242.6,536.1 L1246.0,537.2 L1248.5,538.0 L1251.1,538.8 L1253.8,539.6 L1256.5,540.5 L1259.3,541.4 L1262.2,542.3 L1265.2,543.3 L1268.2,544.2 L1271.3,545.2 L1274.4,546.2 L1277.6,547.2 L1280.9,548.2 L1284.1,549.2 L1287.4,550.2 L1290.7,551.3 L1294.1,552.3 L1297.4,553.4 L1300.8,554.5 L1304.1,555.5 L1307.5,556.6 L1310.9,557.6 L1314.2,558.7 L1317.6,559.7 L1320.9,560.8 L1324.2,561.8 L1327.5,562.9 L1330.7,563.9 L1333.9,564.9 L1337.0,565.9 L1340.1,566.8 L1343.2,567.8 L1346.1,568.7 L1349.0,569.7 L1351.9,570.6 L1354.7,571.4 L1357.3,572.3 L1359.9,573.1 L1362.5,573.9 L1364.9,574.6 L1367.2,575.4 L1369.4,576.1 L1371.5,576.7 L1373.5,577.4 L1375.3,577.9 L1377.0,578.5 L1380.8,579.7 L1383.9,580.8 L1386.6,581.7 L1389.1,582.6 L1391.8,583.5 L1394.8,584.4 L1398.4,585.3 L1400.9,586.0 L1403.5,586.7 L1406.4,587.4 L1409.4,588.1 L1412.5,588.8 L1415.8,589.5 L1419.1,590.2 L1422.5,590.9 L1425.9,591.6 L1429.3,592.3 L1432.7,593.0 L1436.1,593.6 L1439.4,594.3 L1442.6,594.9 L1445.7,595.5 L1448.6,596.1 L1451.4,596.6 L1453.9,597.1 L1456.2,597.6 L1459.8,598.4 L1463.2,599.4 L1466.6,600.3 L1470.2,601.2 L1474.2,601.6 L1478.4,601.5 L1482.9,600.3 L1487.2,598.4 L1491.4,595.6 L1495.0,591.5 L1497.1,586.3 L1497.7,581.2 L1497.5,576.5 L1497.0,571.9 L1496.4,568.6 L1495.6,565.2 L1494.6,561.9 L1493.4,558.6 L1492.2,555.3 L1491.1,552.2 L1489.9,549.1 L1488.9,546.0 L1488.9,546.0 L1489.9,549.1 L1491.1,552.2 L1492.2,555.3 L1493.4,558.6 L1494.6,561.9 L1495.6,565.2 L1496.4,568.6 L1497.0,571.9 L1497.0,576.5 L1496.7,581.1 L1495.7,585.9 L1493.4,590.4 L1489.8,593.7 L1485.9,595.7 L1481.9,596.9 L1477.8,597.5 L1474.2,597.6 L1470.8,597.2 L1467.4,596.4 L1464.1,595.5 L1460.6,594.5 L1456.9,593.6 L1454.6,593.2 L1452.0,592.7 L1449.3,592.1 L1446.4,591.6 L1443.3,591.0 L1440.1,590.3 L1436.8,589.7 L1433.4,589.0 L1430.0,588.4 L1426.6,587.7 L1423.2,587.0 L1419.8,586.3 L1416.5,585.6 L1413.3,584.9 L1410.2,584.2 L1407.2,583.5 L1404.4,582.8 L1401.8,582.1 L1399.4,581.4 L1395.9,580.5 L1393.0,579.6 L1390.4,578.8 L1387.9,577.9 L1385.2,577.0 L1382.1,575.9 L1378.2,574.7 L1376.5,574.1 L1374.7,573.5 L1372.7,572.9 L1370.6,572.3 L1368.4,571.6 L1366.1,570.8 L1363.7,570.1 L1361.1,569.3 L1358.5,568.5 L1355.9,567.6 L1353.1,566.7 L1350.3,565.8 L1347.3,564.9 L1344.4,564.0 L1341.3,563.0 L1338.2,562.1 L1335.1,561.1 L1331.9,560.1 L1328.7,559.0 L1325.4,558.0 L1322.1,557.0 L1318.8,555.9 L1315.4,554.9 L1312.1,553.8 L1308.7,552.8 L1305.3,551.7 L1302.0,550.6 L1298.6,549.6 L1295.3,548.5 L1291.9,547.5 L1288.6,546.4 L1285.3,545.4 L1282.1,544.4 L1278.8,543.4 L1275.7,542.4 L1272.5,541.4 L1269.4,540.4 L1266.4,539.4 L1263.4,538.5 L1260.5,537.6 L1257.7,536.7 L1255.0,535.8 L1252.3,535.0 L1249.7,534.2 L1247.2,533.4 L1243.8,532.3 L1240.5,531.2 L1237.2,530.2 L1233.9,529.1 L1230.7,528.1 L1227.6,527.1 L1224.5,526.1 L1221.4,525.1 L1218.4,524.1 L1215.4,523.1 L1212.5,522.2 L1209.5,521.3 L1206.7,520.3 L1203.8,519.4 L1201.0,518.5 L1198.2,517.6 L1195.5,516.8 L1192.7,515.9 L1190.0,515.1 L1187.3,514.2 L1184.6,513.4 L1181.9,512.6 L1179.3,511.8 L1176.0,510.8 L1172.9,509.9 L1169.7,509.0 L1166.7,508.1 L1163.7,507.3 L1160.7,506.5 L1157.8,505.7 L1154.9,504.9 L1152.0,504.1 L1149.1,503.3 L1146.2,502.5 L1143.2,501.7 L1140.3,500.9 L1137.3,500.1 L1134.3,499.3 L1131.3,498.5 L1128.1,497.6 L1125.0,496.6 L1121.8,495.7 L1118.7,494.7 L1115.5,493.8 L1112.4,492.9 L1109.2,492.0 L1106.1,491.1 L1103.1,490.3 L1100.1,489.5 L1097.1,488.8 L1094.2,488.1 L1091.4,487.5 L1088.6,487.1 L1085.4,486.6 L1082.4,486.2 L1079.5,485.8 L1076.7,485.5 L1074.0,485.3 L1071.2,485.2 L1068.3,485.2 L1065.3,485.3 L1062.1,485.4 L1058.5,485.7 L1056.3,486.0 L1053.9,486.3 L1051.4,486.7 L1048.8,487.2 L1046.1,487.7 L1043.3,488.3 L1040.4,488.9 L1037.5,489.6 L1034.6,490.3 L1031.5,491.1 L1028.5,491.9 L1025.4,492.7 L1022.2,493.5 L1019.1,494.4 L1015.9,495.2 L1012.8,496.1 L1009.6,497.0 L1006.4,497.9 L1003.3,498.8 L1000.2,499.7 L997.1,500.6 L994.0,501.4 L991.0,502.3 L988.0,503.1 L985.1,503.9 L982.3,504.6 L979.2,505.5 L976.1,506.4 L973.0,507.3 L969.8,508.2 L966.7,509.1 L963.6,510.0 L960.4,510.9 L957.3,511.8 L954.2,512.8 L951.2,513.7 L948.1,514.6 L945.1,515.5 L942.2,516.4 L939.3,517.2 L936.5,518.1 L933.7,518.9 L931.1,519.7 L928.5,520.5 L925.9,521.3 L923.5,522.0 L921.2,522.7 L917.5,523.9 L914.1,524.9 L910.9,525.9 L907.9,526.8 L905.1,527.7 L902.3,528.6 L899.5,529.6 L896.7,530.6 L893.6,531.8 L890.6,533.0 L887.6,534.2 L884.7,535.4 L882.1,536.6 L879.6,538.0 L877.3,539.4 L874.8,541.2 L872.4,542.9 L870.3,544.8 L868.3,546.6 L866.6,548.6 L865.1,550.9 L864.1,552.8 L863.2,555.0 L862.3,557.4 L861.5,560.1 L860.7,563.0 L860.0,566.1 L859.2,569.5 L858.3,573.0 L857.5,576.7 L856.8,579.1 L856.1,581.6 L855.4,584.1 L854.7,586.7 L854.1,589.4 L853.4,592.1 L852.7,594.9 L852.1,597.7 L851.4,600.6 L850.8,603.6 L850.1,606.6 L849.5,609.6 L848.9,612.7 L848.3,615.8 L847.6,619.0 L847.0,622.2 L846.4,625.4 L845.8,628.7 L845.3,631.3 L844.9,633.9 L844.4,636.7 L844.0,639.6 L843.5,642.5 L843.1,645.6 L842.7,648.7 L842.3,651.8 L841.9,655.0 L841.5,658.3 L841.1,661.6 L840.7,664.9 L840.3,668.2 L839.9,671.5 L839.5,674.9 L839.1,678.2 L838.7,681.5 L838.2,684.8 L837.8,688.1 L837.3,691.3 L836.9,694.5 L836.4,697.7 L835.9,700.8 L835.3,703.8 L834.8,706.8 L834.2,709.7 L833.6,712.5 L832.9,715.3 L832.2,718.0 L831.1,721.7 L830.0,725.3 L828.9,728.8 L827.7,732.2 L826.4,735.4 L825.2,738.6 L823.9,741.6 L822.6,744.6 L821.3,747.4 L819.9,750.2 L818.6,753.0 L817.2,755.6 L815.8,758.2 L814.1,761.2 L812.3,764.0 L810.5,766.8 L808.7,769.6 L806.7,772.3 L804.7,775.0 L802.5,777.6 L800.1,780.1 L797.7,782.5 L795.1,784.7 L792.5,786.9 L789.8,788.9 L787.0,790.8 L784.0,792.7 L781.0,794.4 L777.9,795.9 L774.8,797.3 L771.5,798.5 L768.5,799.6 L765.3,800.6 L762.1,801.4 L758.8,802.1 L755.5,802.7 L752.1,803.1 L748.7,803.4 L745.2,803.6 L741.6,803.6 L738.1,803.5 L735.0,803.3 L731.8,803.0 L728.6,802.6 L725.4,802.1 L722.2,801.4 L718.9,800.7 L715.6,799.9 L712.4,799.1 L709.1,798.2 L705.8,797.2 L702.6,796.3 L699.4,795.3 L696.2,794.2 L693.0,793.2 L689.9,792.2 L686.9,791.1 L683.9,790.0 L680.9,788.8 L677.9,787.6 L675.0,786.3 L672.0,785.0 L669.1,783.7 L666.2,782.4 L663.4,781.0 L660.5,779.6 L657.6,778.3 L654.8,776.9 L652.0,775.6 L649.1,774.3 L646.3,773.0 L643.5,771.7 L640.8,770.6 L638.1,769.5 L635.5,768.4 L632.8,767.4 L630.2,766.5 L627.6,765.5 L624.9,764.5 L622.2,763.4 L619.4,762.3 L616.5,761.1 L613.6,759.9 L610.5,758.5 L607.3,756.9 L604.0,755.3 L600.5,753.4 L596.9,751.4 L595.1,750.4 L593.2,749.3 L591.3,748.1 L589.3,746.9 L587.3,745.6 L585.2,744.3 L583.1,743.0 L580.9,741.6 L578.8,740.2 L576.5,738.7 L574.3,737.2 L572.0,735.6 L569.7,734.1 L567.3,732.4 L564.9,730.8 L562.5,729.1 L560.0,727.4 L557.5,725.6 L555.0,723.8 L552.5,722.0 L550.0,720.2 L547.4,718.4 L544.8,716.5 L542.2,714.6 L539.5,712.7 L536.9,710.7 L534.2,708.8 L531.5,706.8 L528.9,704.8 L526.2,702.8 L523.4,700.8 L520.7,698.8 L518.0,696.7 L515.3,694.7 L512.5,692.7 L509.8,690.6 L507.1,688.6 L504.4,686.5 L501.6,684.5 L498.9,682.4 L496.2,680.4 L493.5,678.3 L490.8,676.3 L488.1,674.2 L485.4,672.2 L482.7,670.2 L480.1,668.2 L477.4,666.2 L474.8,664.2 L472.2,662.2 L469.6,660.3 L467.0,658.4 L464.5,656.5 L462.0,654.6 L459.5,652.7 L457.0,650.9 L454.6,649.0 L452.2,647.2 L449.8,645.5 L447.5,643.7 L445.2,642.0 L442.9,640.4 L440.7,638.7 L438.5,637.1 L436.3,635.6 L433.5,633.6 L430.7,631.6 L427.9,629.5 L425.0,627.5 L422.2,625.4 L419.3,623.4 L416.4,621.3 L413.5,619.2 L410.6,617.1 L407.7,615.0 L404.8,613.0 L401.9,610.9 L399.1,608.8 L396.2,606.8 L393.4,604.7 L390.6,602.7 L387.8,600.7 L385.1,598.7 L382.4,596.8 L379.7,594.8 L377.1,592.9 L374.5,591.1 L371.9,589.3 L369.5,587.5 L367.0,585.7 L364.6,584.0 L362.3,582.4 L360.1,580.7 L357.9,579.2 L355.8,577.7 L353.8,576.2 L351.8,574.9 L349.9,573.5 L348.2,572.3 L346.5,571.1 L344.9,570.0 L343.4,569.0 L342.0,568.0 L340.7,567.1 L337.0,565.1 L334.1,563.8 L331.5,562.7 L328.7,561.4Z"/>
<path fill="#8995bf" d="M329.1,560.8 L331.8,562.2 L334.2,563.6 L337.0,565.1 L340.6,567.3 L341.8,568.2 L343.2,569.2 L344.7,570.3 L346.3,571.4 L347.9,572.6 L349.7,573.9 L351.6,575.2 L353.5,576.6 L355.5,578.1 L357.6,579.6 L359.8,581.2 L362.0,582.8 L364.3,584.5 L366.7,586.2 L369.1,588.0 L371.6,589.8 L374.1,591.6 L376.7,593.5 L379.3,595.4 L381.9,597.4 L384.6,599.4 L387.4,601.4 L390.1,603.4 L392.9,605.4 L395.7,607.5 L398.5,609.6 L401.4,611.6 L404.3,613.7 L407.1,615.8 L410.0,617.9 L412.9,620.0 L415.8,622.1 L418.6,624.2 L421.5,626.3 L424.3,628.4 L427.2,630.5 L430.0,632.5 L432.8,634.6 L435.6,636.6 L437.7,638.1 L439.9,639.7 L442.2,641.4 L444.4,643.0 L446.7,644.7 L449.1,646.5 L451.4,648.2 L453.8,650.0 L456.3,651.9 L458.7,653.7 L461.2,655.6 L463.7,657.5 L466.3,659.4 L468.8,661.3 L471.4,663.2 L474.0,665.2 L476.7,667.2 L479.3,669.2 L482.0,671.2 L484.6,673.2 L487.3,675.2 L490.0,677.3 L492.7,679.3 L495.4,681.4 L498.1,683.4 L500.9,685.5 L503.6,687.5 L506.3,689.6 L509.1,691.6 L511.8,693.7 L514.5,695.7 L517.3,697.7 L520.0,699.8 L522.7,701.8 L525.4,703.8 L528.1,705.8 L530.8,707.8 L533.5,709.8 L536.1,711.7 L538.8,713.7 L541.4,715.6 L544.0,717.5 L546.6,719.4 L549.2,721.2 L551.8,723.1 L554.3,724.9 L556.8,726.6 L559.3,728.4 L561.8,730.1 L564.2,731.8 L566.6,733.5 L569.0,735.1 L571.3,736.7 L573.6,738.2 L575.8,739.7 L578.1,741.2 L580.3,742.6 L582.4,744.0 L584.5,745.4 L586.6,746.7 L588.6,748.0 L590.6,749.2 L592.5,750.3 L594.4,751.5 L596.3,752.5 L599.9,754.5 L603.4,756.4 L606.8,758.1 L610.0,759.6 L613.1,761.0 L616.0,762.3 L618.9,763.5 L621.7,764.6 L624.5,765.6 L627.1,766.6 L629.8,767.6 L632.4,768.6 L635.0,769.6 L637.6,770.6 L640.3,771.7 L643.0,772.9 L645.8,774.1 L648.6,775.4 L651.4,776.7 L654.3,778.1 L657.1,779.4 L660.0,780.8 L662.8,782.1 L665.7,783.5 L668.6,784.8 L671.5,786.2 L674.5,787.5 L677.4,788.7 L680.4,790.0 L683.5,791.2 L686.5,792.3 L689.5,793.3 L692.7,794.4 L695.8,795.4 L699.0,796.5 L702.2,797.5 L705.5,798.4 L708.8,799.4 L712.1,800.3 L715.4,801.1 L718.6,801.9 L721.9,802.6 L725.2,803.3 L728.4,803.8 L731.7,804.3 L734.9,804.6 L738.0,804.8 L741.6,804.9 L745.2,804.8 L748.8,804.7 L752.3,804.4 L755.7,803.9 L759.1,803.3 L762.4,802.6 L765.7,801.8 L768.9,800.8 L772.0,799.7 L775.2,798.4 L778.4,796.9 L781.5,795.2 L784.5,793.4 L787.4,791.5 L790.2,789.5 L792.9,787.4 L795.5,785.1 L798.0,782.8 L800.4,780.3 L802.6,777.7 L804.7,775.0 L806.7,772.3 L808.5,769.5 L810.2,766.7 L811.9,763.8 L813.5,760.9 L815.1,757.9 L816.5,755.3 L817.9,752.6 L819.2,749.9 L820.6,747.1 L821.9,744.3 L823.2,741.3 L824.5,738.3 L825.7,735.1 L827.0,731.9 L828.2,728.6 L829.3,725.1 L830.4,721.5 L831.5,717.8 L832.2,715.1 L832.8,712.4 L833.5,709.6 L834.0,706.7 L834.6,703.7 L835.1,700.7 L835.6,697.6 L836.1,694.4 L836.6,691.2 L837.1,688.0 L837.5,684.7 L837.9,681.4 L838.3,678.1 L838.8,674.8 L839.2,671.4 L839.6,668.1 L839.9,664.8 L840.3,661.5 L840.7,658.2 L841.1,654.9 L841.5,651.7 L841.9,648.6 L842.4,645.5 L842.8,642.4 L843.2,639.5 L843.7,636.6 L844.1,633.8 L844.6,631.1 L845.1,628.5 L845.7,625.3 L846.4,622.0 L847.0,618.8 L847.7,615.7 L848.3,612.6 L849.0,609.5 L849.7,606.5 L850.4,603.5 L851.1,600.5 L851.8,597.7 L852.5,594.8 L853.2,592.1 L853.9,589.3 L854.6,586.7 L855.3,584.1 L856.0,581.6 L856.7,579.1 L857.5,576.7 L858.5,573.1 L859.4,569.6 L860.4,566.3 L861.3,563.2 L862.2,560.3 L863.1,557.7 L864.1,555.4 L865.1,553.3 L866.1,551.6 L867.6,549.5 L869.2,547.5 L871.0,545.7 L873.1,544.0 L875.5,542.2 L877.9,540.5 L880.2,539.1 L882.6,537.8 L885.2,536.5 L888.0,535.3 L891.0,534.2 L894.0,533.0 L897.1,531.8 L899.9,530.8 L902.6,529.8 L905.4,528.9 L908.3,528.0 L911.3,527.1 L914.4,526.1 L917.9,525.1 L921.5,523.9 L923.9,523.2 L926.3,522.5 L928.8,521.7 L931.4,520.9 L934.1,520.1 L936.8,519.3 L939.7,518.4 L942.5,517.6 L945.5,516.7 L948.5,515.8 L951.5,514.9 L954.6,514.0 L957.7,513.0 L960.8,512.1 L963.9,511.2 L967.0,510.3 L970.2,509.4 L973.3,508.5 L976.4,507.6 L979.5,506.7 L982.6,505.9 L985.5,505.1 L988.4,504.3 L991.3,503.5 L994.3,502.6 L997.4,501.8 L1000.5,500.9 L1003.6,500.0 L1006.8,499.1 L1009.9,498.2 L1013.1,497.3 L1016.3,496.4 L1019.4,495.6 L1022.6,494.7 L1025.7,493.9 L1028.8,493.1 L1031.8,492.3 L1034.9,491.5 L1037.8,490.8 L1040.7,490.1 L1043.6,489.5 L1046.3,488.9 L1049.0,488.4 L1051.6,488.0 L1054.0,487.6 L1056.4,487.2 L1058.7,487.0 L1062.1,486.7 L1065.3,486.5 L1068.3,486.4 L1071.1,486.5 L1073.9,486.6 L1076.6,486.8 L1079.3,487.1 L1082.2,487.4 L1085.2,487.8 L1088.4,488.3 L1091.1,488.8 L1093.9,489.3 L1096.8,490.0 L1099.8,490.7 L1102.8,491.5 L1105.8,492.3 L1108.9,493.2 L1112.0,494.1 L1115.2,495.0 L1118.3,495.9 L1121.5,496.9 L1124.6,497.8 L1127.8,498.8 L1130.9,499.7 L1134.0,500.5 L1137.0,501.3 L1140.0,502.1 L1142.9,502.9 L1145.8,503.7 L1148.7,504.5 L1151.6,505.3 L1154.5,506.1 L1157.4,506.9 L1160.4,507.7 L1163.3,508.5 L1166.4,509.3 L1169.4,510.2 L1172.5,511.1 L1175.7,512.0 L1178.9,513.0 L1181.6,513.8 L1184.2,514.6 L1186.9,515.4 L1189.6,516.2 L1192.3,517.1 L1195.1,518.0 L1197.8,518.8 L1200.6,519.7 L1203.4,520.6 L1206.3,521.5 L1209.2,522.4 L1212.1,523.4 L1215.0,524.3 L1218.0,525.3 L1221.0,526.3 L1224.1,527.3 L1227.2,528.3 L1230.3,529.3 L1233.5,530.3 L1236.8,531.4 L1240.1,532.4 L1243.5,533.5 L1246.9,534.6 L1249.4,535.4 L1251.9,536.2 L1254.6,537.0 L1257.3,537.9 L1260.2,538.8 L1263.1,539.7 L1266.0,540.6 L1269.1,541.6 L1272.1,542.6 L1275.3,543.5 L1278.5,544.5 L1281.7,545.6 L1284.9,546.6 L1288.2,547.6 L1291.5,548.7 L1294.9,549.7 L1298.2,550.8 L1301.6,551.8 L1305.0,552.9 L1308.3,554.0 L1311.7,555.0 L1315.1,556.1 L1318.4,557.1 L1321.7,558.2 L1325.0,559.2 L1328.3,560.2 L1331.5,561.3 L1334.7,562.3 L1337.8,563.2 L1340.9,564.2 L1344.0,565.2 L1347.0,566.1 L1349.9,567.0 L1352.7,567.9 L1355.5,568.8 L1358.2,569.7 L1360.8,570.5 L1363.3,571.3 L1365.7,572.0 L1368.0,572.8 L1370.2,573.5 L1372.3,574.1 L1374.3,574.7 L1376.1,575.3 L1377.8,575.9 L1381.7,577.1 L1384.8,578.2 L1387.5,579.1 L1390.0,580.0 L1392.6,580.8 L1395.6,581.7 L1399.1,582.6 L1401.5,583.3 L1404.1,584.0 L1407.0,584.7 L1409.9,585.4 L1413.1,586.1 L1416.3,586.8 L1419.6,587.5 L1423.0,588.2 L1426.4,588.9 L1429.8,589.6 L1433.2,590.3 L1436.6,590.9 L1439.9,591.6 L1443.1,592.2 L1446.2,592.8 L1449.1,593.4 L1451.8,593.9 L1454.4,594.4 L1456.7,594.9 L1460.4,595.8 L1463.8,596.7 L1467.2,597.6 L1470.6,598.4 L1474.2,598.9 L1478.0,598.8 L1482.2,597.9 L1486.2,596.4 L1490.1,594.1 L1493.6,590.6 L1495.7,585.9 L1496.5,581.0 L1496.5,576.5 L1496.2,572.0 L1495.7,568.7 L1494.9,565.4 L1493.9,562.1 L1492.7,558.8 L1491.5,555.6 L1490.3,552.4 L1489.2,549.3 L1488.2,546.2 L1479.0,548.8 L1479.7,552.0 L1480.5,555.4 L1481.4,558.7 L1482.2,561.9 L1482.9,565.0 L1483.4,567.9 L1483.7,570.5 L1483.8,572.8 L1483.8,576.5 L1483.5,579.7 L1483.0,581.9 L1482.4,583.0 L1481.8,583.8 L1480.4,584.8 L1478.3,585.7 L1476.0,586.4 L1474.3,586.7 L1472.2,586.7 L1469.5,586.4 L1466.3,585.8 L1462.6,585.2 L1458.5,584.5 L1456.1,584.2 L1453.5,583.9 L1450.7,583.5 L1447.8,583.1 L1444.7,582.6 L1441.5,582.2 L1438.2,581.7 L1434.8,581.2 L1431.4,580.7 L1428.0,580.1 L1424.6,579.6 L1421.2,579.0 L1417.9,578.5 L1414.7,578.0 L1411.6,577.4 L1408.6,576.9 L1405.8,576.4 L1403.3,575.9 L1400.9,575.4 L1397.6,574.5 L1394.8,573.7 L1392.4,572.9 L1389.9,572.0 L1387.2,571.1 L1384.0,570.0 L1380.2,568.7 L1378.4,568.2 L1376.5,567.6 L1374.6,567.0 L1372.5,566.3 L1370.3,565.6 L1368.0,564.9 L1365.5,564.1 L1363.0,563.3 L1360.4,562.5 L1357.7,561.7 L1355.0,560.8 L1352.1,559.9 L1349.2,559.0 L1346.2,558.0 L1343.2,557.1 L1340.1,556.1 L1337.0,555.1 L1333.8,554.1 L1330.5,553.1 L1327.3,552.1 L1324.0,551.0 L1320.6,550.0 L1317.3,548.9 L1313.9,547.9 L1310.6,546.8 L1307.2,545.7 L1303.8,544.7 L1300.5,543.6 L1297.1,542.6 L1293.8,541.5 L1290.5,540.5 L1287.2,539.4 L1283.9,538.4 L1280.7,537.4 L1277.5,536.4 L1274.4,535.4 L1271.3,534.4 L1268.3,533.5 L1265.3,532.5 L1262.4,531.6 L1259.6,530.7 L1256.9,529.9 L1254.2,529.0 L1251.6,528.2 L1249.1,527.4 L1245.7,526.3 L1242.4,525.3 L1239.1,524.2 L1235.8,523.2 L1232.6,522.2 L1229.5,521.1 L1226.4,520.1 L1223.3,519.1 L1220.3,518.2 L1217.3,517.2 L1214.4,516.2 L1211.5,515.3 L1208.6,514.4 L1205.7,513.5 L1202.9,512.6 L1200.1,511.7 L1197.3,510.8 L1194.6,509.9 L1191.8,509.1 L1189.1,508.2 L1186.4,507.4 L1183.7,506.6 L1181.1,505.8 L1177.8,504.8 L1174.6,503.9 L1171.5,503.0 L1168.4,502.1 L1165.4,501.3 L1162.4,500.5 L1159.4,499.6 L1156.5,498.8 L1153.6,498.0 L1150.7,497.3 L1147.8,496.5 L1144.9,495.7 L1141.9,494.9 L1139.0,494.1 L1136.0,493.3 L1133.0,492.4 L1129.9,491.6 L1126.8,490.6 L1123.6,489.7 L1120.5,488.8 L1117.3,487.8 L1114.1,486.9 L1111.0,486.0 L1107.8,485.1 L1104.7,484.2 L1101.6,483.4 L1098.5,482.7 L1095.5,482.0 L1092.5,481.4 L1089.6,480.9 L1086.3,480.4 L1083.2,479.9 L1080.3,479.5 L1077.3,479.1 L1074.4,478.8 L1071.4,478.7 L1068.3,478.6 L1065.1,478.6 L1061.6,478.8 L1057.9,479.0 L1055.5,479.3 L1052.9,479.6 L1050.3,480.0 L1047.6,480.4 L1044.8,480.9 L1041.9,481.5 L1038.9,482.1 L1036.0,482.7 L1032.9,483.4 L1029.8,484.1 L1026.7,484.9 L1023.6,485.7 L1020.4,486.5 L1017.2,487.3 L1014.0,488.2 L1010.8,489.0 L1007.6,489.9 L1004.4,490.7 L1001.3,491.6 L998.1,492.5 L995.1,493.3 L992.0,494.1 L989.0,494.9 L986.1,495.7 L983.2,496.4 L980.4,497.1 L977.2,497.9 L974.1,498.7 L970.9,499.4 L967.7,500.2 L964.5,501.0 L961.3,501.8 L958.2,502.6 L955.0,503.4 L951.9,504.3 L948.8,505.1 L945.7,505.8 L942.7,506.6 L939.7,507.4 L936.8,508.2 L933.9,508.9 L931.1,509.6 L928.4,510.3 L925.8,511.0 L923.2,511.6 L920.8,512.3 L918.5,512.9 L914.8,513.7 L911.4,514.5 L908.1,515.2 L905.0,515.9 L902.0,516.6 L899.0,517.3 L895.9,518.1 L892.9,519.0 L889.7,519.9 L886.4,520.9 L883.1,521.8 L879.8,522.9 L876.5,524.1 L873.2,525.5 L870.1,527.1 L866.9,528.9 L863.8,530.8 L860.7,532.9 L857.6,535.3 L854.6,538.2 L851.9,541.4 L849.8,544.5 L848.1,547.7 L846.6,551.0 L845.3,554.3 L844.1,557.6 L843.0,561.0 L841.9,564.4 L840.9,567.8 L839.7,571.3 L839.0,573.8 L838.2,576.4 L837.5,579.1 L836.7,581.8 L836.0,584.6 L835.2,587.5 L834.5,590.3 L833.8,593.3 L833.1,596.3 L832.4,599.3 L831.6,602.4 L831.0,605.5 L830.3,608.7 L829.6,611.9 L828.9,615.1 L828.2,618.4 L827.6,621.7 L826.9,625.1 L826.4,627.9 L825.9,630.8 L825.4,633.8 L825.0,636.8 L824.5,639.9 L824.1,643.0 L823.7,646.2 L823.3,649.5 L822.9,652.7 L822.5,656.0 L822.2,659.3 L821.8,662.7 L821.4,666.0 L821.0,669.3 L820.6,672.6 L820.3,675.9 L819.9,679.2 L819.5,682.4 L819.0,685.6 L818.6,688.7 L818.2,691.7 L817.7,694.7 L817.3,697.7 L816.8,700.5 L816.3,703.2 L815.8,705.9 L815.2,708.4 L814.7,710.8 L814.1,713.0 L813.2,716.4 L812.2,719.7 L811.2,722.8 L810.2,725.9 L809.1,728.8 L808.0,731.6 L806.9,734.4 L805.8,737.1 L804.6,739.7 L803.4,742.2 L802.2,744.8 L800.9,747.3 L799.7,749.7 L798.2,752.6 L796.7,755.3 L795.2,758.0 L793.8,760.4 L792.3,762.7 L790.9,764.9 L789.3,767.0 L787.7,768.9 L786.0,770.8 L784.1,772.6 L782.1,774.4 L780.0,776.1 L777.8,777.8 L775.5,779.3 L773.2,780.8 L770.9,782.1 L768.5,783.3 L766.0,784.3 L763.6,785.2 L761.1,786.0 L758.5,786.7 L755.9,787.4 L753.2,787.9 L750.4,788.3 L747.5,788.6 L744.6,788.8 L741.6,788.8 L738.6,788.8 L736.1,788.7 L733.5,788.4 L730.8,788.1 L727.9,787.7 L725.1,787.1 L722.1,786.5 L719.1,785.8 L716.0,785.1 L712.9,784.3 L709.8,783.4 L706.7,782.5 L703.6,781.6 L700.5,780.6 L697.5,779.6 L694.5,778.7 L691.7,777.7 L688.9,776.7 L686.1,775.6 L683.3,774.5 L680.5,773.4 L677.7,772.2 L674.9,770.9 L672.1,769.6 L669.3,768.3 L666.4,767.0 L663.5,765.7 L660.7,764.4 L657.8,763.0 L654.9,761.7 L651.9,760.4 L649.0,759.1 L646.0,757.9 L643.2,756.7 L640.4,755.6 L637.7,754.6 L635.0,753.6 L632.4,752.6 L629.8,751.6 L627.2,750.6 L624.5,749.6 L621.9,748.5 L619.1,747.3 L616.3,746.0 L613.4,744.6 L610.3,743.1 L607.1,741.4 L603.7,739.5 L602.0,738.5 L600.2,737.4 L598.4,736.3 L596.5,735.2 L594.6,734.0 L592.6,732.7 L590.5,731.4 L588.5,730.1 L586.3,728.7 L584.2,727.3 L581.9,725.8 L579.7,724.3 L577.4,722.7 L575.1,721.1 L572.7,719.5 L570.4,717.8 L567.9,716.1 L565.5,714.4 L563.0,712.6 L560.5,710.9 L558.0,709.0 L555.4,707.2 L552.9,705.3 L550.3,703.5 L547.6,701.6 L545.0,699.6 L542.4,697.7 L539.7,695.7 L537.0,693.8 L534.3,691.8 L531.6,689.8 L528.9,687.7 L526.2,685.7 L523.5,683.7 L520.8,681.7 L518.1,679.6 L515.3,677.6 L512.6,675.5 L509.9,673.5 L507.2,671.4 L504.5,669.4 L501.7,667.3 L499.0,665.3 L496.4,663.3 L493.7,661.2 L491.0,659.2 L488.3,657.2 L485.7,655.2 L483.1,653.2 L480.5,651.3 L477.9,649.3 L475.3,647.4 L472.8,645.5 L470.2,643.6 L467.7,641.7 L465.3,639.8 L462.8,638.0 L460.4,636.2 L458.0,634.4 L455.7,632.7 L453.3,631.0 L451.0,629.3 L448.8,627.6 L446.6,626.0 L444.4,624.4 L441.6,622.4 L438.9,620.4 L436.1,618.3 L433.2,616.3 L430.4,614.2 L427.5,612.1 L424.7,610.0 L421.8,607.9 L418.9,605.7 L416.1,603.6 L413.2,601.5 L410.4,599.4 L407.5,597.3 L404.7,595.3 L401.9,593.2 L399.1,591.1 L396.4,589.1 L393.7,587.1 L391.0,585.1 L388.3,583.1 L385.7,581.2 L383.1,579.3 L380.6,577.5 L378.1,575.6 L375.7,573.9 L373.4,572.1 L371.1,570.4 L368.8,568.8 L366.7,567.2 L364.6,565.7 L362.6,564.2 L360.6,562.7 L358.8,561.4 L357.0,560.1 L355.3,558.9 L353.7,557.7 L352.2,556.6 L350.8,555.6 L349.4,554.7 L346.1,552.0 L343.5,549.9 L341.2,548.1 L338.9,546.2Z"/>
<path fill="#bc9090" d="M330.1,559.3 L332.7,560.8 L335.2,562.1 L338.0,563.7 L341.6,565.9 L342.8,566.8 L344.2,567.8 L345.7,568.8 L347.3,570.0 L349.0,571.2 L350.7,572.5 L352.6,573.8 L354.5,575.2 L356.5,576.7 L358.6,578.2 L360.8,579.8 L363.0,581.4 L365.3,583.1 L367.7,584.8 L370.1,586.6 L372.6,588.4 L375.1,590.2 L377.7,592.1 L380.3,594.0 L383.0,596.0 L385.7,597.9 L388.4,599.9 L391.2,602.0 L393.9,604.0 L396.8,606.1 L399.6,608.1 L402.4,610.2 L405.3,612.3 L408.2,614.4 L411.0,616.5 L413.9,618.6 L416.8,620.7 L419.7,622.8 L422.5,624.9 L425.4,627.0 L428.2,629.1 L431.0,631.1 L433.8,633.1 L436.6,635.1 L438.8,636.7 L441.0,638.3 L443.2,640.0 L445.5,641.6 L447.8,643.3 L450.1,645.1 L452.5,646.8 L454.9,648.6 L457.3,650.5 L459.8,652.3 L462.3,654.2 L464.8,656.1 L467.3,658.0 L469.9,659.9 L472.5,661.8 L475.1,663.8 L477.7,665.8 L480.4,667.8 L483.0,669.8 L485.7,671.8 L488.4,673.8 L491.1,675.9 L493.8,677.9 L496.5,680.0 L499.2,682.0 L501.9,684.1 L504.7,686.1 L507.4,688.2 L510.1,690.2 L512.8,692.3 L515.6,694.3 L518.3,696.3 L521.0,698.4 L523.7,700.4 L526.5,702.4 L529.2,704.4 L531.8,706.4 L534.5,708.4 L537.2,710.3 L539.8,712.3 L542.5,714.2 L545.1,716.1 L547.7,717.9 L550.2,719.8 L552.8,721.6 L555.3,723.4 L557.8,725.2 L560.3,727.0 L562.8,728.7 L565.2,730.4 L567.6,732.0 L569.9,733.6 L572.3,735.2 L574.6,736.8 L576.8,738.3 L579.0,739.8 L581.2,741.2 L583.4,742.6 L585.5,743.9 L587.5,745.2 L589.5,746.5 L591.5,747.7 L593.4,748.8 L595.3,749.9 L597.2,751.0 L600.8,753.0 L604.2,754.8 L607.5,756.5 L610.7,758.0 L613.8,759.4 L616.7,760.7 L619.6,761.9 L622.4,763.0 L625.1,764.0 L627.8,765.0 L630.4,766.0 L633.0,767.0 L635.6,768.0 L638.3,769.0 L641.0,770.1 L643.7,771.3 L646.5,772.5 L649.3,773.8 L652.2,775.1 L655.0,776.5 L657.8,777.8 L660.7,779.2 L663.6,780.5 L666.4,781.9 L669.3,783.2 L672.2,784.6 L675.2,785.9 L678.1,787.1 L681.1,788.3 L684.1,789.5 L687.1,790.6 L690.1,791.7 L693.2,792.7 L696.3,793.8 L699.5,794.8 L702.7,795.8 L706.0,796.8 L709.2,797.7 L712.5,798.6 L715.8,799.4 L719.0,800.2 L722.3,800.9 L725.5,801.6 L728.7,802.1 L731.9,802.5 L735.0,802.8 L738.1,803.0 L741.6,803.1 L745.2,803.1 L748.6,802.9 L752.1,802.6 L755.4,802.2 L758.7,801.6 L762.0,800.9 L765.2,800.1 L768.3,799.1 L771.4,798.1 L774.5,796.8 L777.6,795.3 L780.6,793.7 L783.6,792.0 L786.4,790.1 L789.2,788.1 L791.8,786.0 L794.3,783.9 L796.8,781.6 L799.1,779.2 L801.3,776.6 L803.3,774.0 L805.2,771.3 L807.0,768.6 L808.7,765.8 L810.4,762.9 L812.0,760.0 L813.6,757.1 L815.0,754.5 L816.3,751.8 L817.7,749.1 L819.0,746.4 L820.3,743.5 L821.6,740.6 L822.9,737.6 L824.1,734.5 L825.3,731.3 L826.5,728.0 L827.6,724.6 L828.7,721.0 L829.8,717.3 L830.5,714.7 L831.1,712.0 L831.7,709.2 L832.3,706.3 L832.9,703.4 L833.4,700.4 L833.9,697.3 L834.4,694.2 L834.9,691.0 L835.3,687.7 L835.8,684.5 L836.2,681.2 L836.6,677.9 L837.0,674.6 L837.4,671.2 L837.8,667.9 L838.2,664.6 L838.6,661.3 L839.0,658.0 L839.4,654.7 L839.8,651.5 L840.2,648.4 L840.6,645.2 L841.0,642.2 L841.5,639.2 L841.9,636.3 L842.4,633.5 L842.9,630.8 L843.4,628.2 L844.0,624.9 L844.7,621.7 L845.3,618.5 L846.0,615.3 L846.6,612.2 L847.3,609.1 L848.0,606.1 L848.7,603.1 L849.4,600.1 L850.1,597.2 L850.8,594.4 L851.5,591.6 L852.2,588.9 L852.9,586.2 L853.6,583.6 L854.3,581.1 L855.0,578.6 L855.8,576.2 L856.8,572.6 L857.8,569.1 L858.7,565.8 L859.6,562.6 L860.5,559.7 L861.5,557.1 L862.5,554.6 L863.6,552.5 L864.7,550.6 L866.3,548.3 L868.0,546.3 L869.9,544.4 L872.1,542.5 L874.5,540.7 L877.0,539.0 L879.4,537.5 L881.9,536.2 L884.6,534.9 L887.4,533.7 L890.4,532.5 L893.5,531.3 L896.6,530.1 L899.4,529.1 L902.1,528.1 L904.9,527.2 L907.8,526.3 L910.8,525.4 L914.0,524.4 L917.4,523.4 L921.1,522.3 L923.4,521.5 L925.8,520.8 L928.3,520.0 L930.9,519.3 L933.6,518.4 L936.4,517.6 L939.2,516.7 L942.1,515.9 L945.0,515.0 L948.0,514.1 L951.0,513.2 L954.1,512.3 L957.2,511.4 L960.3,510.4 L963.4,509.5 L966.6,508.6 L969.7,507.7 L972.9,506.8 L976.0,505.9 L979.1,505.0 L982.2,504.2 L985.0,503.4 L987.9,502.6 L990.9,501.8 L993.9,501.0 L996.9,500.1 L1000.0,499.2 L1003.1,498.3 L1006.3,497.4 L1009.5,496.5 L1012.6,495.6 L1015.8,494.8 L1019.0,493.9 L1022.1,493.0 L1025.2,492.2 L1028.3,491.4 L1031.4,490.6 L1034.4,489.8 L1037.4,489.1 L1040.3,488.4 L1043.2,487.8 L1046.0,487.2 L1048.7,486.7 L1051.3,486.2 L1053.8,485.8 L1056.2,485.5 L1058.5,485.2 L1062.0,484.9 L1065.3,484.8 L1068.3,484.7 L1071.2,484.7 L1074.0,484.8 L1076.7,485.0 L1079.5,485.3 L1082.4,485.7 L1085.5,486.1 L1088.7,486.6 L1091.4,487.1 L1094.3,487.6 L1097.2,488.3 L1100.2,489.0 L1103.2,489.8 L1106.3,490.6 L1109.4,491.5 L1112.5,492.4 L1115.7,493.3 L1118.8,494.3 L1122.0,495.2 L1125.1,496.2 L1128.3,497.1 L1131.4,498.0 L1134.5,498.8 L1137.5,499.6 L1140.4,500.4 L1143.4,501.2 L1146.3,502.0 L1149.2,502.8 L1152.1,503.6 L1155.0,504.4 L1157.9,505.2 L1160.8,506.0 L1163.8,506.8 L1166.8,507.7 L1169.9,508.5 L1173.0,509.4 L1176.2,510.4 L1179.4,511.3 L1182.1,512.1 L1184.8,512.9 L1187.4,513.7 L1190.1,514.6 L1192.9,515.4 L1195.6,516.3 L1198.4,517.2 L1201.2,518.0 L1204.0,518.9 L1206.8,519.9 L1209.7,520.8 L1212.6,521.7 L1215.6,522.7 L1218.5,523.6 L1221.6,524.6 L1224.6,525.6 L1227.7,526.6 L1230.9,527.6 L1234.1,528.7 L1237.3,529.7 L1240.6,530.8 L1244.0,531.8 L1247.4,532.9 L1249.9,533.7 L1252.5,534.5 L1255.1,535.4 L1257.9,536.2 L1260.7,537.1 L1263.6,538.0 L1266.6,539.0 L1269.6,539.9 L1272.7,540.9 L1275.8,541.9 L1279.0,542.9 L1282.2,543.9 L1285.5,544.9 L1288.8,546.0 L1292.1,547.0 L1295.4,548.0 L1298.8,549.1 L1302.1,550.2 L1305.5,551.2 L1308.9,552.3 L1312.2,553.3 L1315.6,554.4 L1318.9,555.5 L1322.2,556.5 L1325.5,557.5 L1328.8,558.6 L1332.0,559.6 L1335.2,560.6 L1338.4,561.6 L1341.5,562.6 L1344.5,563.5 L1347.5,564.4 L1350.4,565.4 L1353.2,566.3 L1356.0,567.1 L1358.7,568.0 L1361.3,568.8 L1363.8,569.6 L1366.2,570.4 L1368.5,571.1 L1370.7,571.8 L1372.8,572.4 L1374.8,573.1 L1376.7,573.7 L1378.4,574.2 L1382.2,575.5 L1385.3,576.5 L1388.0,577.5 L1390.5,578.3 L1393.1,579.2 L1396.1,580.0 L1399.5,580.9 L1401.9,581.6 L1404.5,582.3 L1407.3,583.0 L1410.3,583.7 L1413.4,584.4 L1416.6,585.1 L1419.9,585.8 L1423.3,586.5 L1426.7,587.2 L1430.1,587.9 L1433.5,588.5 L1436.9,589.2 L1440.2,589.8 L1443.4,590.5 L1446.4,591.1 L1449.4,591.6 L1452.1,592.2 L1454.7,592.7 L1457.0,593.1 L1460.7,594.0 L1464.2,595.0 L1467.5,595.9 L1470.8,596.7 L1474.2,597.1 L1477.7,597.0 L1481.6,596.2 L1485.4,594.8 L1489.0,592.7 L1492.1,589.6 L1494.0,585.3 L1494.7,580.9 L1494.8,576.5 L1494.5,572.1 L1494.0,569.0 L1493.2,565.7 L1492.2,562.5 L1491.0,559.3 L1489.9,556.1 L1488.7,552.9 L1487.5,549.8 L1486.5,546.7 L1480.7,548.3 L1481.4,551.5 L1482.2,554.9 L1483.1,558.2 L1483.9,561.4 L1484.6,564.6 L1485.1,567.5 L1485.4,570.2 L1485.5,572.7 L1485.5,576.5 L1485.3,579.9 L1484.7,582.4 L1483.9,584.0 L1482.9,585.1 L1481.2,586.4 L1478.8,587.4 L1476.3,588.2 L1474.3,588.5 L1471.9,588.4 L1469.1,588.1 L1465.9,587.5 L1462.2,586.9 L1458.2,586.3 L1455.8,585.9 L1453.2,585.6 L1450.4,585.2 L1447.5,584.8 L1444.4,584.3 L1441.2,583.9 L1437.9,583.4 L1434.5,582.9 L1431.1,582.4 L1427.7,581.8 L1424.2,581.3 L1420.9,580.8 L1417.6,580.2 L1414.3,579.7 L1411.2,579.1 L1408.3,578.6 L1405.5,578.1 L1402.9,577.6 L1400.5,577.1 L1397.1,576.2 L1394.3,575.3 L1391.8,574.5 L1389.3,573.7 L1386.6,572.7 L1383.5,571.7 L1379.6,570.4 L1377.9,569.8 L1376.0,569.3 L1374.0,568.6 L1371.9,568.0 L1369.7,567.3 L1367.4,566.5 L1365.0,565.8 L1362.5,565.0 L1359.9,564.2 L1357.2,563.3 L1354.4,562.4 L1351.6,561.6 L1348.7,560.6 L1345.7,559.7 L1342.7,558.7 L1339.6,557.8 L1336.4,556.8 L1333.2,555.8 L1330.0,554.7 L1326.7,553.7 L1323.4,552.7 L1320.1,551.6 L1316.8,550.6 L1313.4,549.5 L1310.1,548.5 L1306.7,547.4 L1303.3,546.3 L1300.0,545.3 L1296.6,544.2 L1293.3,543.2 L1290.0,542.1 L1286.7,541.1 L1283.4,540.1 L1280.2,539.1 L1277.0,538.1 L1273.9,537.1 L1270.8,536.1 L1267.8,535.1 L1264.8,534.2 L1261.9,533.3 L1259.1,532.4 L1256.3,531.5 L1253.7,530.7 L1251.1,529.9 L1248.6,529.1 L1245.2,528.0 L1241.8,526.9 L1238.5,525.9 L1235.3,524.8 L1232.1,523.8 L1229.0,522.8 L1225.8,521.8 L1222.8,520.8 L1219.8,519.8 L1216.8,518.9 L1213.8,517.9 L1210.9,517.0 L1208.0,516.0 L1205.2,515.1 L1202.4,514.2 L1199.6,513.3 L1196.8,512.5 L1194.1,511.6 L1191.3,510.8 L1188.6,509.9 L1185.9,509.1 L1183.2,508.3 L1180.6,507.5 L1177.3,506.5 L1174.1,505.6 L1171.0,504.7 L1167.9,503.8 L1164.9,503.0 L1161.9,502.1 L1159.0,501.3 L1156.0,500.5 L1153.1,499.7 L1150.2,498.9 L1147.3,498.2 L1144.4,497.4 L1141.5,496.6 L1138.5,495.8 L1135.5,495.0 L1132.5,494.1 L1129.4,493.2 L1126.3,492.3 L1123.1,491.4 L1120.0,490.4 L1116.8,489.5 L1113.6,488.6 L1110.5,487.6 L1107.3,486.8 L1104.2,485.9 L1101.1,485.1 L1098.1,484.4 L1095.1,483.7 L1092.2,483.1 L1089.3,482.6 L1086.1,482.1 L1083.0,481.6 L1080.0,481.2 L1077.2,480.9 L1074.3,480.6 L1071.3,480.4 L1068.3,480.3 L1065.1,480.4 L1061.7,480.5 L1058.1,480.8 L1055.7,481.0 L1053.2,481.3 L1050.6,481.7 L1047.9,482.1 L1045.1,482.6 L1042.2,483.2 L1039.3,483.8 L1036.3,484.4 L1033.3,485.1 L1030.3,485.8 L1027.1,486.6 L1024.0,487.4 L1020.8,488.2 L1017.7,489.0 L1014.5,489.9 L1011.3,490.7 L1008.1,491.6 L1004.9,492.4 L1001.7,493.3 L998.6,494.1 L995.5,495.0 L992.5,495.8 L989.5,496.6 L986.5,497.4 L983.6,498.1 L980.8,498.8 L977.7,499.6 L974.5,500.4 L971.3,501.1 L968.2,501.9 L965.0,502.7 L961.8,503.5 L958.6,504.3 L955.5,505.1 L952.3,505.9 L949.2,506.7 L946.2,507.5 L943.1,508.3 L940.2,509.1 L937.2,509.8 L934.4,510.6 L931.6,511.3 L928.9,512.0 L926.3,512.7 L923.7,513.3 L921.3,514.0 L918.9,514.5 L915.3,515.4 L911.8,516.2 L908.6,516.9 L905.5,517.6 L902.5,518.3 L899.5,519.0 L896.5,519.8 L893.4,520.7 L890.2,521.6 L887.0,522.5 L883.7,523.5 L880.5,524.5 L877.3,525.7 L874.0,527.1 L871.0,528.6 L867.8,530.4 L864.8,532.2 L861.8,534.2 L858.8,536.6 L856.0,539.3 L853.3,542.4 L851.3,545.4 L849.7,548.5 L848.2,551.6 L846.9,554.9 L845.8,558.2 L844.7,561.5 L843.6,564.9 L842.5,568.3 L841.4,571.8 L840.7,574.3 L839.9,576.9 L839.2,579.6 L838.4,582.3 L837.7,585.1 L836.9,587.9 L836.2,590.8 L835.5,593.7 L834.8,596.7 L834.1,599.7 L833.4,602.8 L832.7,605.9 L832.0,609.0 L831.3,612.2 L830.6,615.5 L829.9,618.7 L829.3,622.0 L828.6,625.4 L828.1,628.2 L827.6,631.1 L827.2,634.0 L826.7,637.0 L826.3,640.1 L825.9,643.3 L825.5,646.5 L825.1,649.7 L824.7,652.9 L824.3,656.2 L823.9,659.5 L823.5,662.9 L823.1,666.2 L822.8,669.5 L822.4,672.8 L822.0,676.1 L821.6,679.4 L821.2,682.6 L820.8,685.8 L820.4,688.9 L819.9,692.0 L819.5,695.0 L819.0,698.0 L818.5,700.8 L818.0,703.6 L817.5,706.2 L817.0,708.8 L816.4,711.2 L815.8,713.5 L814.9,716.9 L813.9,720.2 L812.9,723.4 L811.8,726.5 L810.7,729.4 L809.6,732.3 L808.5,735.1 L807.4,737.8 L806.2,740.4 L805.0,743.0 L803.7,745.5 L802.5,748.1 L801.2,750.5 L799.7,753.4 L798.2,756.2 L796.8,758.8 L795.3,761.3 L793.8,763.7 L792.3,766.0 L790.7,768.1 L789.0,770.1 L787.2,772.0 L785.3,773.9 L783.2,775.8 L781.1,777.5 L778.8,779.2 L776.5,780.8 L774.1,782.3 L771.7,783.6 L769.2,784.9 L766.6,785.9 L764.1,786.9 L761.6,787.7 L758.9,788.4 L756.2,789.1 L753.4,789.6 L750.6,790.0 L747.7,790.3 L744.7,790.5 L741.6,790.6 L738.5,790.6 L736.0,790.4 L733.3,790.2 L730.5,789.8 L727.6,789.4 L724.7,788.8 L721.7,788.2 L718.7,787.5 L715.6,786.8 L712.5,785.9 L709.4,785.1 L706.2,784.2 L703.1,783.2 L700.0,782.3 L696.9,781.3 L693.9,780.3 L691.1,779.4 L688.3,778.3 L685.5,777.3 L682.7,776.1 L679.8,775.0 L677.0,773.8 L674.2,772.5 L671.4,771.2 L668.5,769.9 L665.7,768.6 L662.8,767.3 L659.9,765.9 L657.0,764.6 L654.1,763.3 L651.2,762.0 L648.3,760.7 L645.4,759.5 L642.5,758.3 L639.8,757.3 L637.1,756.2 L634.4,755.2 L631.8,754.2 L629.2,753.3 L626.5,752.2 L623.9,751.2 L621.2,750.1 L618.4,748.9 L615.6,747.6 L612.6,746.2 L609.5,744.6 L606.3,742.9 L602.8,741.0 L601.1,740.0 L599.3,738.9 L597.5,737.8 L595.6,736.7 L593.6,735.5 L591.6,734.2 L589.6,732.9 L587.5,731.5 L585.4,730.1 L583.2,728.7 L581.0,727.2 L578.7,725.7 L576.4,724.1 L574.1,722.5 L571.7,720.9 L569.3,719.3 L566.9,717.6 L564.5,715.8 L562.0,714.1 L559.5,712.3 L557.0,710.5 L554.4,708.6 L551.8,706.8 L549.2,704.9 L546.6,703.0 L544.0,701.0 L541.3,699.1 L538.7,697.1 L536.0,695.2 L533.3,693.2 L530.6,691.2 L527.9,689.2 L525.2,687.1 L522.5,685.1 L519.7,683.1 L517.0,681.0 L514.3,679.0 L511.6,676.9 L508.8,674.9 L506.1,672.8 L503.4,670.8 L500.7,668.7 L498.0,666.7 L495.3,664.7 L492.6,662.6 L489.9,660.6 L487.3,658.6 L484.6,656.6 L482.0,654.6 L479.4,652.7 L476.8,650.7 L474.2,648.8 L471.7,646.9 L469.2,645.0 L466.7,643.1 L464.2,641.2 L461.8,639.4 L459.3,637.6 L457.0,635.8 L454.6,634.1 L452.3,632.4 L450.0,630.7 L447.8,629.0 L445.6,627.4 L443.4,625.9 L440.6,623.8 L437.8,621.8 L435.0,619.7 L432.2,617.7 L429.4,615.6 L426.5,613.5 L423.6,611.4 L420.8,609.3 L417.9,607.2 L415.0,605.0 L412.2,602.9 L409.3,600.8 L406.5,598.7 L403.7,596.7 L400.9,594.6 L398.1,592.5 L395.3,590.5 L392.6,588.5 L389.9,586.5 L387.3,584.6 L384.7,582.6 L382.1,580.7 L379.6,578.9 L377.1,577.0 L374.7,575.3 L372.3,573.5 L370.0,571.8 L367.8,570.2 L365.6,568.6 L363.6,567.1 L361.5,565.6 L359.6,564.2 L357.7,562.8 L356.0,561.5 L354.3,560.3 L352.7,559.1 L351.2,558.0 L349.8,557.0 L348.4,556.1 L345.1,553.4 L342.5,551.4 L340.3,549.6 L337.9,547.7Z"/>
<path fill="#8a4848" d="M330.9,558.1 L333.6,559.5 L336.0,560.9 L338.8,562.5 L342.4,564.7 L343.7,565.6 L345.1,566.6 L346.6,567.6 L348.2,568.8 L349.8,570.0 L351.6,571.2 L353.5,572.6 L355.4,574.0 L357.4,575.5 L359.5,577.0 L361.7,578.6 L363.9,580.2 L366.2,581.9 L368.6,583.6 L371.0,585.4 L373.5,587.2 L376.0,589.0 L378.6,590.9 L381.2,592.8 L383.9,594.8 L386.6,596.7 L389.3,598.7 L392.0,600.8 L394.8,602.8 L397.6,604.9 L400.5,606.9 L403.3,609.0 L406.2,611.1 L409.0,613.2 L411.9,615.3 L414.8,617.4 L417.7,619.5 L420.5,621.6 L423.4,623.7 L426.3,625.8 L429.1,627.8 L431.9,629.9 L434.7,631.9 L437.5,633.9 L439.7,635.5 L441.8,637.1 L444.1,638.8 L446.4,640.4 L448.7,642.1 L451.0,643.9 L453.4,645.6 L455.8,647.4 L458.2,649.2 L460.7,651.1 L463.2,653.0 L465.7,654.9 L468.2,656.8 L470.8,658.7 L473.4,660.6 L476.0,662.6 L478.6,664.6 L481.3,666.6 L483.9,668.6 L486.6,670.6 L489.3,672.6 L492.0,674.7 L494.7,676.7 L497.4,678.8 L500.1,680.8 L502.8,682.9 L505.6,684.9 L508.3,687.0 L511.0,689.0 L513.7,691.1 L516.5,693.1 L519.2,695.1 L521.9,697.2 L524.6,699.2 L527.3,701.2 L530.0,703.2 L532.7,705.2 L535.4,707.2 L538.1,709.1 L540.7,711.0 L543.3,713.0 L546.0,714.9 L548.5,716.7 L551.1,718.6 L553.7,720.4 L556.2,722.2 L558.7,724.0 L561.2,725.7 L563.6,727.4 L566.0,729.1 L568.4,730.8 L570.8,732.4 L573.1,734.0 L575.4,735.5 L577.6,737.0 L579.9,738.5 L582.0,739.9 L584.2,741.3 L586.3,742.6 L588.3,743.9 L590.3,745.2 L592.3,746.4 L594.2,747.5 L596.1,748.6 L597.9,749.7 L601.5,751.7 L604.9,753.5 L608.2,755.2 L611.3,756.7 L614.4,758.0 L617.3,759.3 L620.1,760.5 L622.9,761.6 L625.6,762.6 L628.3,763.6 L630.9,764.6 L633.5,765.6 L636.2,766.6 L638.8,767.6 L641.5,768.7 L644.3,769.9 L647.1,771.2 L650.0,772.5 L652.8,773.8 L655.6,775.1 L658.5,776.5 L661.3,777.8 L664.2,779.2 L667.1,780.5 L670.0,781.9 L672.9,783.2 L675.8,784.5 L678.7,785.7 L681.6,786.9 L684.6,788.1 L687.6,789.2 L690.6,790.3 L693.7,791.3 L696.8,792.3 L700.0,793.3 L703.2,794.3 L706.4,795.3 L709.6,796.3 L712.9,797.1 L716.1,798.0 L719.4,798.8 L722.6,799.5 L725.8,800.1 L728.9,800.6 L732.0,801.0 L735.1,801.4 L738.1,801.5 L741.6,801.6 L745.1,801.6 L748.5,801.4 L751.9,801.1 L755.2,800.7 L758.4,800.1 L761.6,799.5 L764.7,798.7 L767.8,797.7 L770.8,796.7 L773.9,795.4 L776.9,794.0 L779.9,792.4 L782.8,790.7 L785.6,788.9 L788.3,786.9 L790.8,784.9 L793.3,782.7 L795.7,780.5 L798.0,778.2 L800.1,775.7 L802.1,773.1 L804.0,770.5 L805.7,767.8 L807.4,765.0 L809.1,762.2 L810.7,759.3 L812.3,756.4 L813.6,753.8 L815.0,751.2 L816.3,748.5 L817.6,745.7 L818.9,742.9 L820.2,740.0 L821.5,737.1 L822.7,734.0 L823.9,730.8 L825.1,727.5 L826.2,724.1 L827.3,720.6 L828.3,716.9 L829.0,714.3 L829.7,711.7 L830.3,708.9 L830.9,706.0 L831.4,703.1 L831.9,700.1 L832.4,697.1 L832.9,693.9 L833.4,690.8 L833.8,687.5 L834.3,684.3 L834.7,681.0 L835.1,677.7 L835.5,674.4 L835.9,671.1 L836.3,667.7 L836.7,664.4 L837.1,661.1 L837.5,657.8 L837.9,654.6 L838.3,651.3 L838.7,648.2 L839.1,645.0 L839.6,642.0 L840.0,639.0 L840.5,636.1 L840.9,633.3 L841.4,630.6 L841.9,627.9 L842.5,624.7 L843.2,621.4 L843.8,618.2 L844.5,615.0 L845.2,611.9 L845.8,608.8 L846.5,605.7 L847.2,602.7 L847.9,599.8 L848.6,596.9 L849.3,594.0 L850.0,591.2 L850.7,588.5 L851.4,585.8 L852.2,583.2 L852.9,580.7 L853.6,578.2 L854.3,575.7 L855.4,572.1 L856.3,568.7 L857.3,565.3 L858.2,562.2 L859.1,559.2 L860.1,556.5 L861.1,554.0 L862.3,551.7 L863.5,549.7 L865.1,547.3 L867.0,545.2 L869.0,543.2 L871.2,541.3 L873.7,539.5 L876.3,537.7 L878.7,536.2 L881.3,534.8 L884.0,533.5 L886.9,532.3 L889.9,531.1 L893.0,529.9 L896.1,528.7 L898.9,527.7 L901.7,526.7 L904.5,525.8 L907.4,524.9 L910.4,523.9 L913.6,523.0 L917.0,521.9 L920.7,520.8 L923.0,520.1 L925.4,519.4 L927.9,518.6 L930.5,517.8 L933.2,517.0 L936.0,516.2 L938.8,515.3 L941.7,514.4 L944.6,513.5 L947.6,512.6 L950.6,511.7 L953.7,510.8 L956.8,509.9 L959.9,509.0 L963.0,508.1 L966.2,507.2 L969.3,506.2 L972.5,505.3 L975.6,504.5 L978.7,503.6 L981.8,502.7 L984.6,502.0 L987.5,501.2 L990.5,500.3 L993.5,499.5 L996.5,498.6 L999.6,497.8 L1002.7,496.9 L1005.9,496.0 L1009.1,495.1 L1012.2,494.2 L1015.4,493.3 L1018.6,492.4 L1021.7,491.6 L1024.9,490.7 L1028.0,489.9 L1031.1,489.1 L1034.1,488.4 L1037.1,487.6 L1040.0,487.0 L1042.9,486.3 L1045.7,485.8 L1048.4,485.2 L1051.0,484.8 L1053.6,484.4 L1056.0,484.0 L1058.4,483.7 L1061.9,483.4 L1065.2,483.2 L1068.3,483.0 L1071.2,483.0 L1074.1,483.1 L1076.9,483.2 L1079.8,483.5 L1082.7,483.8 L1085.8,484.2 L1089.0,484.6 L1091.8,485.1 L1094.7,485.7 L1097.7,486.3 L1100.7,487.1 L1103.7,487.8 L1106.8,488.7 L1109.9,489.6 L1113.1,490.5 L1116.2,491.4 L1119.4,492.4 L1122.5,493.3 L1125.7,494.2 L1128.8,495.2 L1131.9,496.0 L1135.0,496.9 L1138.0,497.7 L1141.0,498.5 L1143.9,499.3 L1146.8,500.1 L1149.7,500.9 L1152.6,501.7 L1155.5,502.5 L1158.4,503.3 L1161.4,504.1 L1164.4,504.9 L1167.4,505.7 L1170.4,506.6 L1173.6,507.5 L1176.7,508.4 L1180.0,509.4 L1182.7,510.2 L1185.3,511.0 L1188.0,511.8 L1190.7,512.7 L1193.5,513.5 L1196.2,514.4 L1199.0,515.3 L1201.8,516.1 L1204.6,517.0 L1207.4,518.0 L1210.3,518.9 L1213.2,519.8 L1216.2,520.8 L1219.1,521.7 L1222.2,522.7 L1225.2,523.7 L1228.3,524.7 L1231.5,525.7 L1234.7,526.8 L1237.9,527.8 L1241.2,528.9 L1244.6,529.9 L1248.0,531.0 L1250.5,531.8 L1253.1,532.6 L1255.7,533.4 L1258.5,534.3 L1261.3,535.2 L1264.2,536.1 L1267.2,537.1 L1270.2,538.0 L1273.3,539.0 L1276.4,540.0 L1279.6,541.0 L1282.8,542.0 L1286.1,543.0 L1289.4,544.0 L1292.7,545.1 L1296.0,546.1 L1299.4,547.2 L1302.7,548.3 L1306.1,549.3 L1309.5,550.4 L1312.8,551.4 L1316.2,552.5 L1319.5,553.5 L1322.8,554.6 L1326.1,555.6 L1329.4,556.7 L1332.6,557.7 L1335.8,558.7 L1339.0,559.7 L1342.1,560.6 L1345.1,561.6 L1348.1,562.5 L1351.0,563.5 L1353.8,564.4 L1356.6,565.2 L1359.3,566.1 L1361.9,566.9 L1364.4,567.7 L1366.8,568.4 L1369.1,569.2 L1371.3,569.9 L1373.4,570.5 L1375.4,571.2 L1377.3,571.8 L1379.0,572.3 L1382.8,573.6 L1385.9,574.8 L1388.6,575.8 L1391.1,576.7 L1393.6,577.6 L1396.5,578.5 L1399.9,579.5 L1402.3,580.1 L1404.9,580.8 L1407.6,581.5 L1410.6,582.2 L1413.7,582.9 L1416.9,583.6 L1420.2,584.3 L1423.6,585.0 L1427.0,585.7 L1430.4,586.4 L1433.8,587.1 L1437.1,587.7 L1440.4,588.4 L1443.6,589.0 L1446.7,589.6 L1449.6,590.2 L1452.4,590.7 L1454.9,591.2 L1457.2,591.7 L1461.1,592.6 L1464.5,593.5 L1467.8,594.5 L1471.0,595.2 L1474.2,595.6 L1477.5,595.6 L1481.2,594.8 L1484.8,593.5 L1488.1,591.6 L1490.9,588.8 L1492.6,584.9 L1493.2,580.7 L1493.3,576.5 L1493.0,572.2 L1492.5,569.2 L1491.7,566.1 L1490.7,562.9 L1489.6,559.7 L1488.4,556.5 L1487.2,553.3 L1486.1,550.2 L1485.0,547.1 L1482.2,547.9 L1482.8,551.1 L1483.6,554.4 L1484.5,557.7 L1485.3,561.0 L1486.0,564.2 L1486.6,567.2 L1486.9,570.0 L1487.0,572.6 L1487.0,576.5 L1486.8,580.0 L1486.1,582.9 L1485.1,584.8 L1483.8,586.3 L1481.8,587.7 L1479.3,588.8 L1476.5,589.6 L1474.3,590.0 L1471.7,589.9 L1468.8,589.6 L1465.6,589.0 L1461.9,588.3 L1458.0,587.7 L1455.6,587.4 L1453.0,587.1 L1450.2,586.7 L1447.2,586.3 L1444.1,585.8 L1440.9,585.4 L1437.6,584.9 L1434.2,584.4 L1430.8,583.9 L1427.4,583.3 L1424.0,582.8 L1420.6,582.2 L1417.3,581.7 L1414.0,581.1 L1410.9,580.6 L1407.9,580.1 L1405.1,579.5 L1402.5,579.0 L1400.1,578.5 L1396.7,577.7 L1393.8,576.9 L1391.3,576.2 L1388.8,575.4 L1386.0,574.5 L1382.9,573.5 L1379.0,572.3 L1377.3,571.8 L1375.4,571.2 L1373.4,570.5 L1371.3,569.9 L1369.1,569.2 L1366.8,568.4 L1364.4,567.7 L1361.9,566.9 L1359.3,566.1 L1356.6,565.2 L1353.8,564.4 L1351.0,563.5 L1348.1,562.5 L1345.1,561.6 L1342.1,560.6 L1339.0,559.7 L1335.8,558.7 L1332.6,557.7 L1329.4,556.7 L1326.1,555.6 L1322.8,554.6 L1319.5,553.5 L1316.2,552.5 L1312.8,551.4 L1309.5,550.4 L1306.1,549.3 L1302.7,548.3 L1299.4,547.2 L1296.0,546.1 L1292.7,545.1 L1289.4,544.0 L1286.1,543.0 L1282.8,542.0 L1279.6,541.0 L1276.4,540.0 L1273.3,539.0 L1270.2,538.0 L1267.2,537.1 L1264.2,536.1 L1261.3,535.2 L1258.5,534.3 L1255.7,533.4 L1253.1,532.6 L1250.5,531.8 L1248.0,531.0 L1244.6,529.9 L1241.2,528.9 L1237.9,527.8 L1234.7,526.8 L1231.5,525.7 L1228.3,524.7 L1225.2,523.7 L1222.2,522.7 L1219.1,521.7 L1216.2,520.8 L1213.2,519.8 L1210.3,518.9 L1207.4,518.0 L1204.6,517.0 L1201.8,516.1 L1199.0,515.3 L1196.2,514.4 L1193.5,513.5 L1190.7,512.7 L1188.0,511.8 L1185.3,511.0 L1182.7,510.2 L1180.0,509.4 L1176.7,508.4 L1173.6,507.5 L1170.4,506.6 L1167.4,505.7 L1164.4,504.9 L1161.4,504.1 L1158.4,503.3 L1155.5,502.5 L1152.6,501.7 L1149.7,500.9 L1146.8,500.1 L1143.9,499.3 L1141.0,498.5 L1138.0,497.7 L1135.0,496.9 L1131.9,496.0 L1128.8,495.2 L1125.7,494.2 L1122.5,493.3 L1119.4,492.4 L1116.2,491.4 L1113.1,490.5 L1109.9,489.6 L1106.8,488.7 L1103.7,487.8 L1100.7,487.1 L1097.7,486.3 L1094.7,485.7 L1091.8,485.1 L1089.0,484.6 L1085.8,484.0 L1082.7,483.5 L1079.8,483.0 L1077.0,482.6 L1074.2,482.3 L1071.3,482.1 L1068.3,482.0 L1065.2,482.0 L1061.8,482.0 L1058.2,482.3 L1055.9,482.5 L1053.4,482.8 L1050.8,483.2 L1048.1,483.6 L1045.4,484.1 L1042.5,484.6 L1039.6,485.2 L1036.7,485.9 L1033.7,486.6 L1030.6,487.3 L1027.5,488.1 L1024.4,488.8 L1021.2,489.6 L1018.0,490.5 L1014.9,491.3 L1011.7,492.2 L1008.5,493.0 L1005.3,493.9 L1002.1,494.7 L999.0,495.6 L995.9,496.4 L992.9,497.2 L989.9,498.0 L986.9,498.8 L984.0,499.6 L981.2,500.3 L978.1,501.0 L974.9,501.8 L971.7,502.6 L968.6,503.4 L965.4,504.2 L962.2,505.0 L959.0,505.8 L955.9,506.6 L952.7,507.4 L949.6,508.2 L946.6,509.0 L943.5,509.8 L940.6,510.5 L937.7,511.3 L934.8,512.0 L932.0,512.8 L929.3,513.5 L926.7,514.1 L924.1,514.8 L921.7,515.4 L919.3,516.0 L915.6,516.9 L912.2,517.6 L909.0,518.4 L905.9,519.1 L902.9,519.7 L899.9,520.5 L896.9,521.2 L893.9,522.1 L890.7,523.0 L887.5,523.9 L884.2,524.9 L881.0,525.9 L877.9,527.1 L874.7,528.4 L871.7,529.9 L868.7,531.6 L865.7,533.4 L862.7,535.4 L859.8,537.7 L857.1,540.3 L854.5,543.3 L852.6,546.1 L851.0,549.1 L849.6,552.2 L848.3,555.4 L847.2,558.6 L846.1,561.9 L845.0,565.3 L844.0,568.8 L842.9,572.3 L842.1,574.8 L841.3,577.3 L840.6,580.0 L839.9,582.7 L839.1,585.5 L838.4,588.3 L837.7,591.1 L836.9,594.1 L836.2,597.0 L835.5,600.0 L834.8,603.1 L834.1,606.2 L833.4,609.3 L832.8,612.5 L832.1,615.8 L831.4,619.0 L830.8,622.3 L830.1,625.7 L829.6,628.4 L829.1,631.3 L828.6,634.3 L828.2,637.3 L827.8,640.3 L827.3,643.5 L826.9,646.7 L826.5,649.9 L826.2,653.1 L825.8,656.4 L825.4,659.7 L825.0,663.0 L824.6,666.4 L824.3,669.7 L823.9,673.0 L823.5,676.3 L823.1,679.6 L822.7,682.8 L822.3,686.0 L821.8,689.1 L821.4,692.2 L821.0,695.2 L820.5,698.2 L820.0,701.1 L819.5,703.9 L819.0,706.5 L818.4,709.1 L817.8,711.6 L817.3,713.9 L816.3,717.4 L815.3,720.7 L814.3,723.9 L813.2,727.0 L812.1,730.0 L811.0,732.8 L809.9,735.7 L808.7,738.4 L807.5,741.0 L806.3,743.7 L805.1,746.2 L803.8,748.7 L802.5,751.2 L801.0,754.1 L799.5,756.9 L798.1,759.6 L796.6,762.1 L795.0,764.5 L793.5,766.8 L791.9,769.0 L790.1,771.1 L788.3,773.1 L786.3,775.0 L784.2,776.9 L782.0,778.7 L779.7,780.4 L777.3,782.1 L774.8,783.6 L772.3,785.0 L769.8,786.2 L767.2,787.3 L764.6,788.3 L762.0,789.1 L759.3,789.9 L756.5,790.5 L753.7,791.1 L750.8,791.5 L747.8,791.8 L744.7,792.0 L741.6,792.1 L738.5,792.1 L735.8,791.9 L733.1,791.7 L730.3,791.3 L727.4,790.9 L724.4,790.3 L721.4,789.7 L718.3,789.0 L715.2,788.2 L712.1,787.4 L708.9,786.5 L705.8,785.6 L702.7,784.7 L699.5,783.7 L696.5,782.7 L693.4,781.7 L690.6,780.8 L687.8,779.8 L684.9,778.7 L682.1,777.5 L679.3,776.4 L676.4,775.1 L673.6,773.9 L670.7,772.6 L667.9,771.3 L665.0,770.0 L662.2,768.6 L659.3,767.3 L656.4,766.0 L653.5,764.7 L650.6,763.4 L647.7,762.1 L644.8,760.9 L642.0,759.7 L639.2,758.7 L636.5,757.6 L633.9,756.6 L631.3,755.6 L628.6,754.7 L626.0,753.6 L623.3,752.6 L620.6,751.5 L617.8,750.3 L614.9,748.9 L611.9,747.5 L608.8,746.0 L605.5,744.2 L602.1,742.3 L600.4,741.3 L598.6,740.2 L596.7,739.1 L594.8,738.0 L592.8,736.7 L590.8,735.5 L588.8,734.2 L586.7,732.8 L584.5,731.4 L582.4,730.0 L580.1,728.5 L577.9,726.9 L575.6,725.4 L573.3,723.8 L570.9,722.1 L568.5,720.5 L566.1,718.8 L563.6,717.0 L561.1,715.3 L558.6,713.5 L556.1,711.7 L553.5,709.8 L550.9,708.0 L548.3,706.1 L545.7,704.2 L543.1,702.2 L540.4,700.3 L537.8,698.3 L535.1,696.4 L532.4,694.4 L529.7,692.4 L527.0,690.4 L524.3,688.3 L521.6,686.3 L518.8,684.3 L516.1,682.2 L513.4,680.2 L510.7,678.1 L507.9,676.1 L505.2,674.0 L502.5,672.0 L499.8,669.9 L497.1,667.9 L494.4,665.9 L491.7,663.8 L489.0,661.8 L486.4,659.8 L483.7,657.8 L481.1,655.8 L478.5,653.9 L475.9,651.9 L473.3,650.0 L470.8,648.1 L468.3,646.2 L465.8,644.3 L463.3,642.4 L460.9,640.6 L458.5,638.8 L456.1,637.0 L453.7,635.3 L451.4,633.6 L449.1,631.9 L446.9,630.3 L444.7,628.6 L442.5,627.1 L439.7,625.0 L436.9,623.0 L434.1,620.9 L431.3,618.9 L428.5,616.8 L425.6,614.7 L422.8,612.6 L419.9,610.5 L417.0,608.4 L414.1,606.3 L411.3,604.1 L408.4,602.0 L405.6,600.0 L402.8,597.9 L400.0,595.8 L397.2,593.8 L394.4,591.7 L391.7,589.7 L389.0,587.7 L386.4,585.8 L383.8,583.8 L381.2,581.9 L378.7,580.1 L376.2,578.3 L373.8,576.5 L371.5,574.7 L369.2,573.0 L366.9,571.4 L364.8,569.8 L362.7,568.3 L360.6,566.8 L358.7,565.4 L356.9,564.0 L355.1,562.7 L353.4,561.5 L351.8,560.3 L350.3,559.3 L348.9,558.3 L347.6,557.3 L344.2,554.7 L341.6,552.6 L339.4,550.8 L337.1,548.9Z"/>
<path fill="#8a4848" d="M1482.6,545.5 C1483.0,545.2 1492.2,553.0 1496.0,558.0 C1500.1,563.4 1504.1,571.6 1505.7,577.0 C1506.8,580.7 1507.4,583.9 1506.6,586.8 C1505.8,589.7 1503.4,592.7 1500.9,594.5 C1498.3,596.3 1495.1,597.0 1491.0,597.4 C1484.8,598.0 1467.1,596.6 1467.0,595.5 C1466.9,594.8 1473.7,594.0 1477.0,592.6 C1480.7,591.1 1485.8,589.9 1488.0,586.8 C1490.4,583.4 1490.3,577.8 1490.0,572.4 C1489.6,565.2 1485.0,551.1 1483.6,547.5 C1483.2,546.4 1482.4,545.6 1482.6,545.5Z"/>
<path fill="#83403f" d="M321.5,546.2 C324,542 329,539 336,537.7 L336.5,546 L340,556 L346,563 L335.4,560.8 L325.4,553 Z"/>
<path fill="none" stroke="#d4e2f4" stroke-width="3" d="M336.4,533.5 C356.9,524.3 378.2,513.9 398.0,506.0 C416.0,498.9 430.9,493.5 450.2,487.8 C473.4,481.0 501.5,475.8 528.0,469.0 C555.9,461.9 584.8,453.0 613.5,446.0 C642.2,439.0 677.7,433.1 700.0,427.0 C714.4,423.1 725.2,420.7 735.0,415.6 C743.2,411.3 747.5,404.4 755.6,400.0 C765.3,394.8 777.7,391.1 790.0,388.0 C803.5,384.6 817.4,383.3 833.4,381.0 C853.2,378.1 876.8,376.0 900.0,372.4 C925.5,368.5 954.6,362.0 980.0,358.0 C1003.0,354.4 1023.3,349.8 1046.0,349.0 C1070.2,348.2 1094.9,350.6 1121.0,354.0 C1150.0,357.8 1182.2,362.7 1212.0,372.0 C1242.6,381.5 1271.9,395.7 1302.0,411.0 C1334.2,427.4 1371.4,448.4 1399.0,468.0 C1421.8,484.2 1442.7,503.7 1457.6,518.0 C1467.7,527.6 1473.6,535.1 1481.6,543.6"/>
</svg>
<!-- browser -->
<div class="a" style="left:5px;top:179px;width:375px;height:31px;background:#d4d4d4;border:1px solid #a8a8a8"></div>
<svg style="left:11px;top:190px" width="14" height="9" viewBox="0 0 14 9"><path d="M0,4.5 L6,0 V9 Z M6,4.5 L12,0 V9 Z" fill="#333"/></svg>
<div class="t" style="left:38.5px;top:189px;font-size:13.7px;color:#555;transform:scaleX(.92)">BROWSER</div>
<svg style="left:353px;top:188px" width="24" height="14" viewBox="0 0 24 14"><circle cx="6.5" cy="6.5" r="5.8" fill="#222"/><rect x="3.3" y="5.6" width="6.4" height="1.9" fill="#fff"/><path d="M21.5,1 V13 M23.5,2 V12" stroke="#888" stroke-width="1"/></svg>
<svg style="left:0;top:210px" width="360" height="250" viewBox="0 210 360 250">
<defs>
<radialGradient id="bulb" cx="0.4" cy="0.35" r="0.7"><stop offset="0" stop-color="#fffbd0"/><stop offset="0.5" stop-color="#f4e050"/><stop offset="1" stop-color="#c8a810"/></radialGradient>
<radialGradient id="bulbb" cx="0.4" cy="0.35" r="0.7"><stop offset="0" stop-color="#ffffff"/><stop offset="0.6" stop-color="#b8d0f0"/><stop offset="1" stop-color="#6890d0"/></radialGradient>
<linearGradient id="trig" x1="0" y1="0" x2="1" y2="1"><stop offset="0" stop-color="#f0f0f0"/><stop offset="1" stop-color="#3a3a3a"/></linearGradient>
<linearGradient id="fold" x1="0" y1="0" x2="0" y2="1"><stop offset="0" stop-color="#fafafa"/><stop offset="1" stop-color="#c8ccd4"/></linearGradient>
<linearGradient id="org" x1="0" y1="0" x2="1" y2="0"><stop offset="0" stop-color="#f8a050"/><stop offset="1" stop-color="#e06818"/></linearGradient>
<pattern id="dash" width="7.5" height="4" patternUnits="userSpaceOnUse"><path d="M1,3.5 L5,0.5" stroke="#6d8ab8" stroke-width="1.6"/></pattern>
</defs>
<!-- root -->
<rect x="50" y="216.5" width="295" height="24.5" fill="#d2d2d2"/>
<rect x="52.3" y="219" width="261" height="19.6" fill="#8a8a8a"/>
<path d="M26,235.3 L39.7,221.7 V235.3 Z" fill="url(#trig)" stroke="#222" stroke-width="1"/>
<g transform="translate(63,228)"><circle cx="0" cy="-1.5" r="6" fill="url(#bulb)" stroke="#c8b030" stroke-width="0.5"/><rect x="-2.5" y="4" width="5" height="5.5" rx="1" fill="#e4e4e8" stroke="#666" stroke-width="0.8"/></g>
<path d="M86,224 L90.5,219.5 H104 V233.5 L99.5,238 H86 Z" fill="#eef0f4" stroke="#444" stroke-width="1"/>
<path d="M99.5,224 L104,219.5 V233.5 L99.5,238 Z" fill="#c4c8d0"/>
<path d="M86,224 H99.5 V238" fill="none" stroke="#888" stroke-width="0.8"/>
<circle cx="326.8" cy="229.3" r="7" fill="#f4f4f4" stroke="#333" stroke-width="1.6"/><circle cx="326.8" cy="229.3" r="3" fill="#222"/>
<!-- doc settings -->
<path d="M50.5,251.5 L61,259.2 L50.5,267 Z" fill="#ececec" stroke="#3c3c3c" stroke-width="1.8" stroke-linejoin="round"/>
<rect x="73" y="247" width="166.5" height="24" fill="#d2d2d2"/>
<g transform="translate(86.1,258.7)"><circle r="7" fill="none" stroke="#5a5a5a" stroke-width="4.2"/><circle r="9.2" fill="none" stroke="#5a5a5a" stroke-width="2.6" stroke-dasharray="3.2 4"/></g>
<!-- named views -->
<path d="M50.5,281.5 L61,289.2 L50.5,297 Z" fill="#ececec" stroke="#3c3c3c" stroke-width="1.8" stroke-linejoin="round"/>
<rect x="73" y="277" width="136.5" height="24" fill="#d2d2d2"/>
<g transform="translate(76.2,281.5)"><path d="M0.5,2.5 H7 L8,0.5 H1.5 Z" fill="#f4f4f4" stroke="#444" stroke-width="1"/><rect x="0.5" y="2.5" width="18" height="13" rx="1" fill="url(#fold)" stroke="#444" stroke-width="1.2"/></g>
<!-- origin -->
<path d="M50.5,311.5 L61,319.2 L50.5,327 Z" fill="#ececec" stroke="#3c3c3c" stroke-width="1.8" stroke-linejoin="round"/>
<rect x="73" y="307" width="118" height="24" fill="#d2d2d2"/>
<g transform="translate(85.5,318)"><circle cx="0" cy="-1.5" r="6" fill="url(#bulbb)" stroke="#6a8ac0" stroke-width="0.6"/><rect x="-2.5" y="4" width="5" height="5.5" rx="1" fill="#e4e4e8" stroke="#666" stroke-width="0.8"/></g>
<g transform="translate(107.5,311.5)"><path d="M0.5,2.5 H7 L8,0.5 H1.5 Z" fill="#f4f4f4" stroke="#444" stroke-width="1"/><rect x="0.5" y="2.5" width="18" height="13" rx="1" fill="url(#fold)" stroke="#444" stroke-width="1.2"/></g>
<!-- bodies -->
<path d="M48.1,356.2 L62.5,341.9 V356.2 Z" fill="url(#trig)" stroke="#222" stroke-width="1"/>
<rect x="72.7" y="337" width="128.3" height="24.3" fill="#d2d2d2"/>
<g transform="translate(85.6,348)"><circle cx="0" cy="-1.5" r="6" fill="url(#bulb)" stroke="#c8b030" stroke-width="0.5"/><rect x="-2.5" y="4" width="5" height="5.5" rx="1" fill="#e4e4e8" stroke="#666" stroke-width="0.8"/></g>
<g transform="translate(107.5,341.5)"><path d="M0.5,2.5 H7 L8,0.5 H1.5 Z" fill="#f4f4f4" stroke="#444" stroke-width="1"/><rect x="0.5" y="2.5" width="18" height="13" rx="1" fill="url(#fold)" stroke="#444" stroke-width="1.2"/></g>
<rect x="103" y="354" width="95" height="4.5" fill="url(#dash)"/>
<!-- unstitched -->
<path d="M70.6,386.2 L85,371.9 V386.2 Z" fill="url(#trig)" stroke="#222" stroke-width="1"/>
<rect x="95" y="367" width="168.7" height="24.3" fill="#d2d2d2"/>
<g transform="translate(108.1,378)"><circle cx="0" cy="-1.5" r="6" fill="url(#bulb)" stroke="#c8b030" stroke-width="0.5"/><rect x="-2.5" y="4" width="5" height="5.5" rx="1" fill="#e4e4e8" stroke="#666" stroke-width="0.8"/></g>
<g transform="translate(130,371.5)"><path d="M0.5,2.5 H7 L8,0.5 H1.5 Z" fill="#f4f4f4" stroke="#444" stroke-width="1"/><rect x="0.5" y="2.5" width="18" height="13" rx="1" fill="url(#fold)" stroke="#444" stroke-width="1.2"/></g>
<rect x="126" y="384" width="131.5" height="4.5" fill="url(#dash)"/>
<!-- body1 -->
<rect x="117.5" y="397" width="31.3" height="24.5" fill="#d2d2d2"/>
<rect x="148.7" y="397" width="117.3" height="24.5" fill="#6895bf"/>
<g transform="translate(130.6,408)"><circle cx="0" cy="-1.5" r="6" fill="url(#bulb)" stroke="#c8b030" stroke-width="0.5"/><rect x="-2.5" y="4" width="5" height="5.5" rx="1" fill="#e4e4e8" stroke="#666" stroke-width="0.8"/></g>
<path d="M153,402 C153,398 172,398 172,402 V416 C172,419 168,419 168,417 V409 H164 V419 H160 V409 H157 V417 C157,419 153,419 153,416 Z" fill="url(#org)" stroke="#b85a10" stroke-width="1"/>
<ellipse cx="162.5" cy="402" rx="9" ry="2.5" fill="#fbb878"/>
<!-- body2 -->
<rect x="95" y="427" width="31.3" height="24.5" fill="#d2d2d2"/>
<rect x="126.3" y="427" width="97.5" height="24.5" fill="#6895bf"/>
<g transform="translate(108.1,438)"><circle cx="0" cy="-1.5" r="6" fill="url(#bulb)" stroke="#c8b030" stroke-width="0.5"/><rect x="-2.5" y="4" width="5" height="5.5" rx="1" fill="#e4e4e8" stroke="#666" stroke-width="0.8"/></g>
<path d="M131,432.5 C131,428.5 149,428.5 149,432.5 V445 C149,449 131,449 131,445 Z" fill="url(#fold)" stroke="#444" stroke-width="1.1"/>
</svg>
<div class="t" style="left:123px;top:223px;font-size:13.7px;color:#fff;font-weight:bold;transform:scaleX(1.04)">industrial design_finish v1</div>
<div class="tt" style="left:114px;top:252.5px">Document Settings</div>
<div class="tt" style="left:114px;top:282.5px">Named Views</div>
<div class="tt" style="left:145px;top:312.5px">Origin</div>
<div class="tt" style="left:145.5px;top:342.5px">Bodies</div>
<div class="tt" style="left:168px;top:372.5px">Unstitched (1)</div>
<div class="t" style="left:190.5px;top:402.5px;font-size:13.7px;color:#fff;font-weight:bold;transform:scaleX(1.0)">Body1 (1)</div>
<div class="t" style="left:168px;top:432.5px;font-size:13.7px;color:#fff;font-weight:bold;transform:scaleX(.97)">Body2</div>
<!-- comments -->
<div class="a" style="left:5px;top:1006px;width:375px;height:31px;background:#d4d4d4;border:1px solid #a8a8a8"></div>
<div class="t" style="left:39px;top:1015px;font-size:13.7px;color:#555;transform:scaleX(.89)">COMMENTS</div>
<svg style="left:353px;top:1015px" width="24" height="15" viewBox="0 0 24 15"><circle cx="6.3" cy="6.5" r="5.8" fill="#222"/><path d="M3.2,6.5 H9.4 M6.3,3.4 V9.6" stroke="#fff" stroke-width="1.8"/><path d="M21.5,0 V14 M23.5,1 V13" stroke="#888" stroke-width="1"/></svg>

<!-- split body dialog -->
<div class="a" style="left:1399px;top:318px;width:313px;height:200px;background:#dedede;border:1px solid #b4b4b4;box-shadow:1px 1px 2px rgba(0,0,0,.15)"></div>
<div class="a" style="left:1400px;top:319px;width:311px;height:29px;background:#d2d2d2;border-bottom:1px solid #b8b8b8"></div>
<div class="a" style="left:1400px;top:472px;width:311px;height:45px;background:#d3d3d3;border-top:1px solid #b8b8b8"></div>
<svg style="left:1406px;top:327px" width="13" height="13" viewBox="0 0 13 13"><circle cx="6.3" cy="6.3" r="5.6" fill="#222"/><rect x="3.2" y="5.4" width="6.2" height="1.9" fill="#fff"/></svg>
<div class="t" style="left:1433px;top:327px;font-size:13.7px;color:#7a7a7a;transform:scaleX(.88)">SPLIT BODY</div>
<div class="tt" style="left:1413px;top:359px;color:#444;transform:scaleX(.95)">Body to Split</div>
<div class="tt" style="left:1413px;top:391px;color:#444;transform:scaleX(.95)">Splitting Tool</div>
<div class="tt" style="left:1413px;top:424px;color:#444;transform:scaleX(.92)">Extend Splitting Tool</div>
<!-- sel 1 -->
<div class="a" style="left:1552px;top:350px;width:96px;height:28px;background:#c8c8c8"></div>
<div class="a" style="left:1648px;top:350px;width:33px;height:28px;background:#d6d6d6"></div>
<svg style="left:1558px;top:356px" width="15" height="19" viewBox="0 0 15 19"><path d="M1.5,1 V15.5 L5,12.3 L7.8,18 L10,17 L7.3,11.3 L12,11.3 Z" fill="#f0f0f0" stroke="#555" stroke-width="1"/></svg>
<div class="t" style="left:1577.5px;top:359px;font-size:13.7px;color:#555;transform:scaleX(.95)">1 selected</div>
<svg style="left:1661px;top:360px" width="12" height="12" viewBox="0 0 12 12"><path d="M1,1 L11,11 M11,1 L1,11" stroke="#444" stroke-width="2.2"/></svg>
<!-- sel 2 -->
<div class="a" style="left:1552px;top:383px;width:96px;height:29px;background:#5b8cc4"></div>
<div class="a" style="left:1648px;top:383px;width:33px;height:29px;background:#d6d6d6"></div>
<svg style="left:1558px;top:389px" width="15" height="19" viewBox="0 0 15 19"><path d="M1.5,1 V15.5 L5,12.3 L7.8,18 L10,17 L7.3,11.3 L12,11.3 Z" fill="#f0f0f0" stroke="#444" stroke-width="1"/></svg>
<div class="t" style="left:1577.5px;top:391.5px;font-size:13.7px;color:#fff;transform:scaleX(.95)">1 selected</div>
<svg style="left:1661px;top:392px" width="12" height="12" viewBox="0 0 12 12"><path d="M1,1 L11,11 M11,1 L1,11" stroke="#444" stroke-width="2.2"/></svg>
<!-- red outlines -->
<div class="a" style="left:1550.5px;top:345.5px;width:134px;height:35px;border:3px solid #ec3a40"></div>
<div class="a" style="left:1548.5px;top:385.5px;width:135px;height:28px;border:3px solid #ec3a40"></div>
<!-- checkbox -->
<div class="a" style="left:1556px;top:422px;width:17px;height:16px;border:1.5px solid #7a7a7a;border-radius:3px;background:linear-gradient(#f4f4f4,#d4d4d4)"></div>
<!-- footer -->
<svg style="left:1416px;top:487px" width="16" height="16" viewBox="0 0 16 16"><circle cx="8" cy="8" r="7.7" fill="#111"/><circle cx="8" cy="4.3" r="1.5" fill="#fff"/><path d="M6,6.8 H9 V11.5 H10.2 V12.8 H5.8 V11.5 H7 V8 H6 Z" fill="#fff"/></svg>
<div class="a" style="left:1525px;top:483px;width:77px;height:23px;background:#e8e8e8;border-left:2px solid #9a9a9a"></div>
<div class="t" style="left:1554.5px;top:488.5px;font-size:14.5px;color:#666">OK</div>
<div class="a" style="left:1521.5px;top:480px;width:82px;height:28px;border:3px solid #ec3a40"></div>
<div class="a" style="left:1616px;top:483px;width:74px;height:23px;background:#ebebeb;border:1px solid #c4c4c4"></div>
<div class="t" style="left:1628px;top:488.5px;font-size:14.5px;color:#666;transform:scaleX(.98)">Cancel</div>

<!-- view cube -->
<svg style="left:1780px;top:110px" width="130" height="120" viewBox="1780 110 130 120">
<defs>
<linearGradient id="vcl" x1="0" y1="0" x2="1" y2="0"><stop offset="0" stop-color="#e4e4e4"/><stop offset="1" stop-color="#d2d2d2"/></linearGradient>
<linearGradient id="vcr" x1="0" y1="0" x2="1" y2="0"><stop offset="0" stop-color="#d0d0d0"/><stop offset="1" stop-color="#dadada"/></linearGradient>
<filter id="blur1"><feGaussianBlur stdDeviation="0.5"/></filter>
</defs>
<g filter="url(#blur1)">
<path d="M1796.3,146.4 L1833.3,140.3 L1880.3,141.7 L1883.7,198.2 L1839.3,218.3 L1803,202.2 Z" fill="#d6d6d6"/>
<path d="M1796.3,146.4 L1833.5,145.5 L1839.3,218.3 L1803,202.2 Z" fill="url(#vcl)"/>
<path d="M1833.5,145.5 L1880.3,141.7 L1883.7,198.2 L1839.3,218.3 Z" fill="url(#vcr)"/>
<path d="M1796.3,146.4 L1833.3,140.3 L1880.3,141.7 L1883.7,198.2 L1839.3,218.3 L1803,202.2 Z M1796.3,146.4 L1833.5,145.5 L1880.3,141.7" fill="none" stroke="#7a7a7a" stroke-width="0.9" stroke-dasharray="2.5 1.8"/>
<text x="0" y="3.5" font-family="Liberation Sans" font-size="10" fill="#707070" text-anchor="middle" textLength="29" lengthAdjust="spacingAndGlyphs" transform="translate(1816.3,178.8) rotate(-86) scale(1,-1)">LEFT</text>
<text x="0" y="4.5" font-family="Liberation Sans" font-size="13" fill="#707070" text-anchor="middle" textLength="40" lengthAdjust="spacingAndGlyphs" transform="translate(1860,176.9) rotate(160)">BOTTOM</text>
<path d="M1798,202.5 L1839.3,218.3" stroke="#70e070" stroke-width="2"/>
<path d="M1839.3,218.3 L1891,199" stroke="#f07070" stroke-width="2"/>
<path d="M1833.3,141 L1839.3,218.3" stroke="#4a4af0" stroke-width="2"/>
<text x="1826" y="135.5" font-family="Liberation Sans" font-size="15" fill="#7a7af0">Z</text>
<text x="1788.5" y="206" font-family="Liberation Sans" font-size="15" fill="#70e070">Y</text>
<text x="1890.5" y="202.5" font-family="Liberation Sans" font-size="15" fill="#f07a7a">X</text>
</g>
</svg>

<!-- nav bar -->
<div class="a" style="left:806px;top:1008px;width:181px;height:30px;background:#c9c9c9"></div>
<div class="a" style="left:995px;top:1008px;width:117px;height:30px;background:#c9c9c9"></div>
<svg style="left:800px;top:1005px" width="320" height="36" viewBox="800 1005 320 36">
<defs>
<linearGradient id="scr" x1="0" y1="0" x2="0" y2="1"><stop offset="0" stop-color="#a8c4ec"/><stop offset="1" stop-color="#7898c8"/></linearGradient>
<radialGradient id="lens" cx="0.4" cy="0.4" r="0.6"><stop offset="0" stop-color="#ffffff"/><stop offset="1" stop-color="#b8d0d8"/></radialGradient>
</defs>
<!-- orbit -->
<path d="M813,1018 C808,1020 808,1025 813,1027" fill="none" stroke="#444" stroke-width="1.3"/>
<ellipse cx="819.5" cy="1023" rx="4.5" ry="9.5" fill="none" stroke="#444" stroke-width="1.4"/>
<path d="M824,1019 C830,1020 831,1026 824,1027" fill="none" stroke="#444" stroke-width="1.4"/>
<circle cx="818.5" cy="1023" r="1.8" fill="#3a8ae0"/>
<path d="M825,1016 l1,-2 l1,2 l2,1 l-2,1 l-1,2 l-1,-2 l-2,-1z" fill="#444"/>
<path d="M836.5,1020.5 H843.5 L840,1025 Z" fill="#333"/>
<!-- look at -->
<rect x="851.5" y="1018.5" width="19" height="13" rx="1" fill="#e8e8e8" stroke="#444" stroke-width="1.4"/>
<rect x="855" y="1022" width="12" height="5.5" fill="#9aa0aa" stroke="#444" stroke-width="0.8"/>
<path d="M854,1018 L857,1013.5 L860,1016 L864,1013 L867,1015.5 L870,1013.5" fill="none" stroke="#444" stroke-width="1.1"/>
<!-- pan -->
<path d="M888,1032 C884,1028 882,1024 884,1022 C885.5,1021 887,1023 888,1024 V1015 C888,1013 890.5,1013 890.5,1015 V1021 V1013.5 C890.5,1011.5 893,1011.5 893,1013.5 V1021 V1014 C893,1012 895.5,1012 895.5,1014 V1021.5 V1016 C895.5,1014 898,1014 898,1016 V1026 C898,1030 896,1032 894,1033 Z" fill="#f4f4f4" stroke="#444" stroke-width="1.2"/>
<!-- zoom -->
<circle cx="921.5" cy="1022" r="5.5" fill="url(#lens)" stroke="#444" stroke-width="1.6"/>
<path d="M925.5,1026 L930,1030.5" stroke="#444" stroke-width="2.6"/>
<path d="M932.5,1014 V1020 M929.5,1017 H935.5 M929.5,1021.5 H935.5" stroke="#333" stroke-width="1.1"/>
<!-- fit -->
<rect x="948.5" y="1013.5" width="19" height="19" fill="none" stroke="#555" stroke-width="0.9" stroke-dasharray="1.6 1.4"/>
<circle cx="956.5" cy="1021" r="6" fill="url(#lens)" stroke="#444" stroke-width="1.6"/>
<path d="M961,1025.5 L966,1030.5" stroke="#444" stroke-width="2.8"/>
<path d="M975,1020.5 H982 L978.5,1025 Z" fill="#333"/>
<!-- display -->
<rect x="1000" y="1014" width="19.5" height="14.5" rx="1.5" fill="#e8e8e8" stroke="#444" stroke-width="1.3"/>
<rect x="1002.5" y="1016.5" width="14.5" height="9.5" fill="url(#scr)"/>
<path d="M1006,1028.5 V1031 H1004 V1032.5 H1015.5 V1031 H1013.5 V1028.5" fill="#e8e8e8" stroke="#444" stroke-width="1"/>
<path d="M1023,1020.5 H1030 L1026.5,1025 Z" fill="#333"/>
<!-- grid -->
<rect x="1038.5" y="1013.5" width="19.5" height="19.5" rx="1" fill="#7a808c" stroke="#444" stroke-width="1.2"/>
<path d="M1042.5,1014 V1032.5 M1046.5,1014 V1032.5 M1050.5,1014 V1032.5 M1054.5,1014 V1032.5 M1039,1017.5 H1057.5 M1039,1021.5 H1057.5 M1039,1025.5 H1057.5 M1039,1029.5 H1057.5" stroke="#e8e8e8" stroke-width="1.1"/>
<path d="M1061.5,1020.5 H1068.5 L1065,1025 Z" fill="#333"/>
<!-- viewports -->
<rect x="1077" y="1014.5" width="18.5" height="17.5" rx="1" fill="#e8e8e8" stroke="#3c5a9a" stroke-width="1.2"/>
<rect x="1078.7" y="1016" width="6.8" height="6.5" fill="#8aaee0" stroke="#3c5a9a" stroke-width="0.6"/><rect x="1087" y="1016" width="6.8" height="6.5" fill="#8aaee0" stroke="#3c5a9a" stroke-width="0.6"/><rect x="1078.7" y="1024" width="6.8" height="6.5" fill="#8aaee0" stroke="#3c5a9a" stroke-width="0.6"/><rect x="1087" y="1024" width="6.8" height="6.5" fill="#8aaee0" stroke="#3c5a9a" stroke-width="0.6"/>
<path d="M1100,1020.5 H1107 L1103.5,1025 Z" fill="#333"/>
</svg>
<div class="t" style="left:1819px;top:1016px;font-size:14px;color:#333;font-weight:bold">2 Bodies</div>

<!-- tooltip + cursor -->
<div class="a" style="left:886.5px;top:570.5px;width:125px;height:16.5px;background:#f4f4f4;border:1px solid #767676"></div>
<div class="t" style="left:889.5px;top:573px;font-size:12.5px;color:#222;transform:scaleX(1.0)">Select a splitting Tool</div>
<svg style="left:866px;top:550px" width="14" height="20" viewBox="0 0 14 20"><path d="M1,1 V15 L4.5,11.8 L7.3,17.5 L9.5,16.5 L6.8,10.8 L11.5,10.8 Z" fill="#111" stroke="#fff" stroke-width="0.9"/></svg>
<svg style="left:0;top:0" width="1920" height="1041" viewBox="0 0 1920 1041">
<defs>
<filter id="sh" x="-30%" y="-30%" width="160%" height="160%"><feGaussianBlur in="SourceAlpha" stdDeviation="2.3"/><feOffset dx="1.5" dy="3" result="b"/><feComponentTransfer><feFuncA type="linear" slope="0.5"/></feComponentTransfer><feMerge><feMergeNode/><feMergeNode in="SourceGraphic"/></feMerge></filter>
</defs>
<g filter="url(#sh)" fill="#f64646">
<path d="M1568,520 L1596.1,537.7 L1588.3,544.2 L1588.7,545.5 L1580.1,549.8 L1570.6,553.3 Z"/>
<path d="M1586.1,559.3 L1594.4,554.1 L1612,583 L1603,588 Z"/>
<ellipse cx="1623" cy="620.3" rx="46.7" ry="43.3"/>
<path d="M862.1,560.4 L885.5,581.1 L876,584.5 L857.8,592.4 Z"/>
<path d="M871.3,586.0 L881.6,614.0" stroke="#f64646" stroke-width="9.6" fill="none"/>
<path d="M885.4,624.4 L895.8,653.0" stroke="#f64646" stroke-width="9.6" fill="none"/>
<path d="M898.6,660.7 L909.3,690.1" stroke="#f64646" stroke-width="9.6" fill="none"/>
<path d="M912.2,698.0 L923.9,730.0" stroke="#f64646" stroke-width="9.6" fill="none"/>
<ellipse cx="936.2" cy="765.2" rx="46.4" ry="43.6"/>
<path d="M1119.9,551.2 L1141.5,575.5 L1132,578 L1113.8,583.3 Z"/>
<path d="M1127.5,579.0 L1129.8,587.0" stroke="#f64646" stroke-width="9.6" fill="none"/>
<path d="M1131.9,594.5 L1140.7,625.6" stroke="#f64646" stroke-width="9.6" fill="none"/>
<path d="M1142.9,633.4 L1151.5,663.7" stroke="#f64646" stroke-width="9.6" fill="none"/>
<path d="M1153.7,671.5 L1162.5,702.6" stroke="#f64646" stroke-width="9.6" fill="none"/>
<ellipse cx="1166" cy="753.3" rx="47" ry="43.4"/>
</g>
<g font-family="Liberation Sans" font-size="62" fill="#fff" text-anchor="middle">
<text x="1623.5" y="643.5">3</text>
<text x="936.5" y="788.5">2</text>
<text x="1164.5" y="776">1</text>
</g>
</svg>
</body></html>
